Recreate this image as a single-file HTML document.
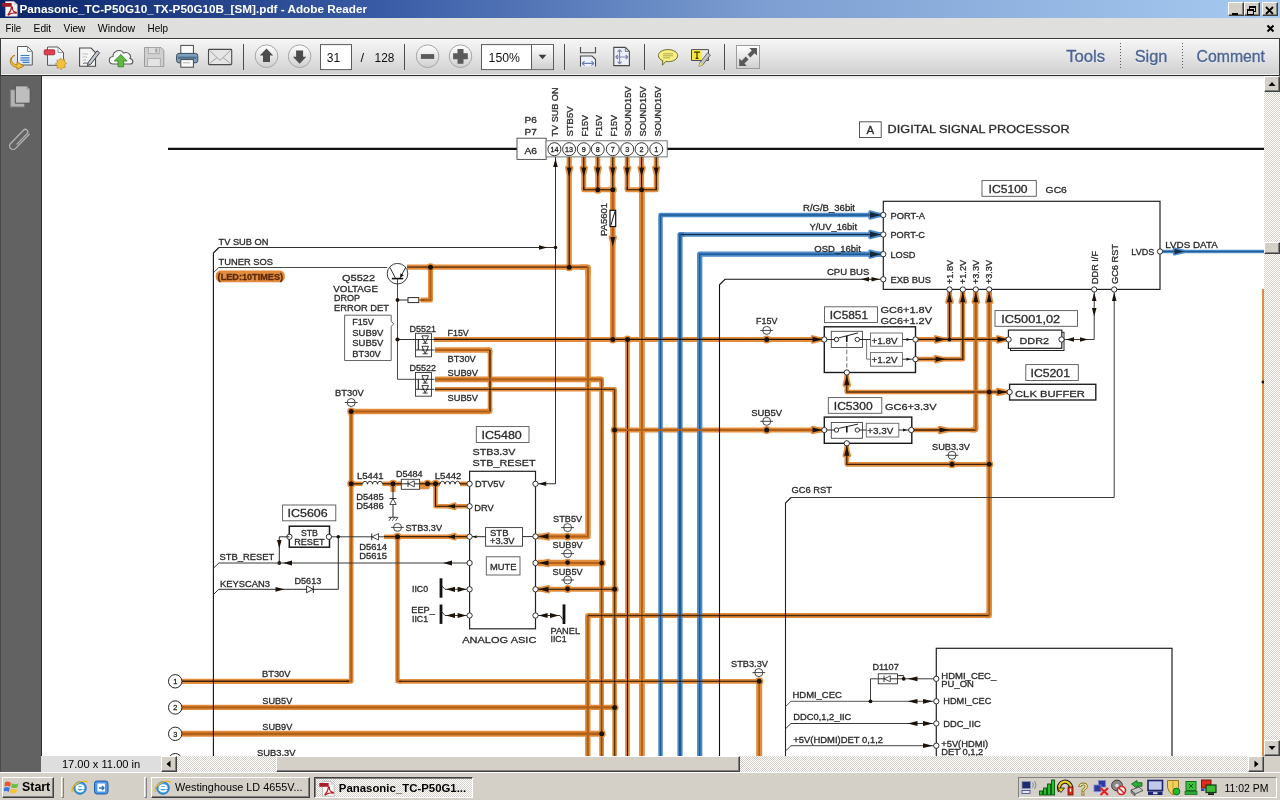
<!DOCTYPE html>
<html><head><meta charset="utf-8"><title>Adobe Reader</title>
<style>
*{box-sizing:border-box;margin:0;padding:0}
html,body{width:1280px;height:800px;overflow:hidden;background:#d4d0c8;font-family:"Liberation Sans",sans-serif;}
.abs{position:absolute}
#title{left:0;top:0;width:1280px;height:18px;background:linear-gradient(90deg,#0a246a 0%,#3a5ca6 30%,#7d9fd2 60%,#a6caf0 100%);}
#title .t{left:19px;top:1px;color:#fff;font-weight:bold;font-size:12px;line-height:15px;white-space:nowrap;letter-spacing:0px}
.wb{top:2px;width:16px;height:14px;background:#d4d0c8;border:1px solid;border-color:#fff #404040 #404040 #fff;box-shadow:inset -1px -1px 0 #808080}
#menu{left:0;top:18px;width:1280px;height:20px;background:#dfdfdd}
#menu span{position:absolute;top:3px;font-size:12px;line-height:14px;color:#000}
#tb{left:0;top:38px;width:1280px;height:38px;background:linear-gradient(180deg,#f6f6f6 0%,#e6e6e6 45%,#cfcfcf 100%);border-top:1px solid #3c3c3c;border-bottom:1px solid #2e2e2e;border-left:1px solid #3c3c3c;border-right:1px solid #3c3c3c}
#tb:before{content:"";position:absolute;left:0;top:0;width:100%;height:1px;background:#fff}
#tb:after{content:"";position:absolute;left:0;bottom:0;width:100%;height:1px;background:#f2f2f2}
.sep{top:46px;width:1px;height:24px;background:#8c8c8c;box-shadow:1px 0 0 #f4f4f4}
.rb{width:23px;height:23px;border-radius:50%;border:1px solid #9a9a9a;background:linear-gradient(180deg,#fdfdfd,#d2d2d2);top:45px}
.inp{background:#fff;border:1px solid #8a8a8a;border-top-color:#6a6a6a;top:44px;height:25px;font-size:13px;line-height:23px;color:#222}
#lp{left:0;top:76px;width:42px;height:696px;background:#626262;border-right:1px solid #2c2c2c;border-left:1px solid #4a4a4a}
#doc{left:42px;top:76px;width:1222px;height:680px;background:#fff;overflow:hidden}
#doc svg{position:absolute;left:-42px;top:-76px;will-change:transform}
svg{will-change:transform}
#vs{left:1264px;top:76px;width:16px;height:680px}
.dith{background-color:#fff;background-image:linear-gradient(45deg,#d4d0c8 25%,transparent 25%,transparent 75%,#d4d0c8 75%),linear-gradient(45deg,#d4d0c8 25%,transparent 25%,transparent 75%,#d4d0c8 75%);background-size:2px 2px;background-position:0 0,1px 1px}
.btn3{background:#d4d0c8;border:1px solid;border-color:#fff #404040 #404040 #fff;box-shadow:inset -1px -1px 0 #808080,inset 1px 1px 0 #d4d0c8}
#hs{left:41px;top:756px;width:1223px;height:16px;background:#d4d0c8}
#task{left:0;top:772px;width:1280px;height:28px;background:#d4d0c8;border-top:1px solid #fff}
.tbtn{top:3px;height:22px;font-size:12px;line-height:18px;white-space:nowrap;overflow:hidden;color:#000}
</style></head><body>

<!-- title bar -->
<div id="title" class="abs">
 <svg class="abs" style="left:0;top:0" width="20" height="18" viewBox="0 0 20 18"><path d="M5.500 1.500 H14 L17.300 4.800 V16.200 H5.500 Z" fill="#f6f4f2" stroke="#c8b8b8" stroke-width="0.600"/><path d="M14 1.500 V4.800 H17.300 Z" fill="#d8d0d0"/><rect x="2.300" y="3" width="9.400" height="3.800" fill="#a01c26"/><path d="M8 14.600 C9.600 12.400 11.200 9.600 11.300 7.600 C11.300 6.600 12.500 6.700 12.400 7.900 C12.300 10 14 12 16 12.300 C16.800 12.500 16.600 13.400 15.600 13.200 C13.400 12.800 10.400 13.200 8.500 15 Z" fill="none" stroke="#b0141e" stroke-width="1.200"/></svg>
 <svg class="abs" style="left:0;top:0" width="400" height="18" font-family="Liberation Sans, sans-serif"><text x="19.4" y="13.1" font-size="11.6" font-weight="bold" fill="#fff" textLength="347.6" lengthAdjust="spacingAndGlyphs">Panasonic_TC-P50G10_TX-P50G10B_[SM].pdf - Adobe Reader</text></svg>
 <div class="abs wb" style="left:1228px"><svg width="14" height="12"><rect x="3" y="8" width="6" height="2" fill="#000"/></svg></div>
 <div class="abs wb" style="left:1244px"><svg width="14" height="12"><rect x="4.5" y="1.5" width="6" height="5" fill="none" stroke="#000"/><rect x="4" y="1" width="7" height="2" fill="#000"/><rect x="2.5" y="4.5" width="6" height="5" fill="#d4d0c8" stroke="#000"/><rect x="2" y="4" width="7" height="2" fill="#000"/></svg></div>
 <div class="abs wb" style="left:1262px"><svg width="14" height="12"><path d="M3 2 L10 9 M10 2 L3 9" stroke="#000" stroke-width="1.8"/></svg></div>
</div>

<!-- menu bar -->
<div id="menu" class="abs">
 <svg class="abs" style="left:0;top:0" width="200" height="20" font-family="Liberation Sans, sans-serif" font-size="11.4" fill="#000">
 <text x="5.6" y="13.5" textLength="15.6" lengthAdjust="spacingAndGlyphs">File</text>
 <text x="33.6" y="13.5" textLength="17.6" lengthAdjust="spacingAndGlyphs">Edit</text>
 <text x="63.6" y="13.5" textLength="21.8" lengthAdjust="spacingAndGlyphs">View</text>
 <text x="97.8" y="13.5" textLength="37.4" lengthAdjust="spacingAndGlyphs">Window</text>
 <text x="147.6" y="13.5" textLength="20.4" lengthAdjust="spacingAndGlyphs">Help</text>
 </svg>
 <svg class="abs" style="left:1266px;top:6px" width="10" height="10"><path d="M1.5 1.5 L7.5 7.5 M7.5 1.5 L1.5 7.5" stroke="#000" stroke-width="2"/></svg>
</div>

<!-- toolbar -->
<div id="tb" class="abs"></div>
<svg class="abs" style="left:0;top:38px" width="1280" height="38" viewBox="0 38 1280 38" font-family="Liberation Sans, sans-serif">
<defs>
<linearGradient id="gb" x1="0" y1="0" x2="0" y2="1"><stop offset="0" stop-color="#ffffff"/><stop offset="1" stop-color="#cfcfcf"/></linearGradient>
<linearGradient id="gp" x1="0" y1="0" x2="0" y2="1"><stop offset="0" stop-color="#ffffff"/><stop offset="1" stop-color="#dfe6f2"/></linearGradient>
</defs>
<!-- 1: doc with blue lines + yellow arrow -->
<path d="M17.5 46.5 H27.5 L32.3 51.5 V65 H17.5 Z" fill="url(#gp)" stroke="#5a5a5a" stroke-width="1"/>
<path d="M27.5 46.5 V51.5 H32.3" fill="none" stroke="#8a8a8a" stroke-width="0.9"/>
<path d="M20.5 55.5 H29.5 M20.5 57.8 H29.5 M20.5 60.1 H29.5 M22.5 62.4 H29.5" stroke="#3f7ec6" stroke-width="1.2"/>
<path d="M15 55.5 C10 56 10 64.5 17 64.8 L17 61.8 L23.8 66 L17 69.5 L17 67.2 C8.5 67.2 8.2 56 15 55.5 Z" fill="#f0c040" stroke="#a87a18" stroke-width="0.9"/>
<!-- 2: doc with red tag and gold star -->
<path d="M47.5 47 H58 L63.5 52.5 V65.3 H47.5 Z" fill="url(#gp)" stroke="#5a5a5a" stroke-width="1"/>
<path d="M58 47 V52.5 H63.5" fill="none" stroke="#8a8a8a" stroke-width="0.9"/>
<rect x="44.2" y="49.8" width="10.5" height="5" rx="1" fill="#e04050" stroke="#a01828" stroke-width="0.8"/>
<path d="M60.5 58 l1.6 2 l2.6 -.6 l-.3 2.6 l2.3 1.3 l-2.1 1.6 l.6 2.6 l-2.6 0 l-1.4 2.2 l-1.7 -2 l-2.6 .4 l.5 -2.6 l-2.2 -1.5 l2.2 -1.4 l-.4 -2.6 l2.6 .2 z" fill="#f2c23c" stroke="#b88a20" stroke-width="0.7"/>
<!-- 3: doc with pen -->
<path d="M79.6 48 H91 L95.5 52.5 V66.3 H79.6 Z" fill="#f4f4f4" stroke="#4a4a4a" stroke-width="1.1"/>
<path d="M82.5 54 H88 M82.5 57 H87 M82.5 60 H86" stroke="#bcbcbc" stroke-width="1"/>
<path d="M83 64 C85 61.5 86.5 64.5 88.5 62.5" fill="none" stroke="#444" stroke-width="0.9"/>
<path d="M88.3 62.3 L97 50.8 L99.6 52.8 L90.8 64.2 L87.4 65.6 Z" fill="#c8ccd2" stroke="#3c424c" stroke-width="1"/>
<!-- 4: cloud with green arrow -->
<path d="M113.5 64 C108 64 108 57 113 56.5 C113 50.5 121 48.5 123.5 53 C128 51 132 55.5 130 58.5 C134 59.5 133.5 64 130 64 Z" fill="#fafafa" stroke="#5c5c5c" stroke-width="1.1"/>
<path d="M120.8 54.5 L127.2 61 H123.6 V66.8 H118 V61 H114.4 Z" fill="#62b844" stroke="#3a8a28" stroke-width="0.9"/>
<!-- 5: floppy (disabled) -->
<path d="M144.5 47.5 H161 L163.8 50.3 V66.5 H144.5 Z" fill="#d0d0d0" stroke="#9c9c9c" stroke-width="1"/>
<rect x="148.3" y="47.5" width="11" height="6.2" fill="#dedede" stroke="#a4a4a4" stroke-width="0.8"/>
<rect x="155.2" y="48.5" width="2.2" height="4" fill="#a4a4a4"/>
<rect x="147.7" y="58.4" width="12.6" height="8" fill="#e4e4e4" stroke="#a4a4a4" stroke-width="0.8"/>
<!-- 6: printer -->
<rect x="180.8" y="45.4" width="12.6" height="9" fill="#fbfbfb" stroke="#4a4a4a" stroke-width="1"/>
<rect x="176.6" y="53.4" width="21.2" height="9.4" rx="2.4" fill="#7f9fbe" stroke="#3a4a5a" stroke-width="1"/>
<rect x="178" y="56.6" width="18.4" height="2.2" fill="#4f6f90"/>
<rect x="180.8" y="59.6" width="12.6" height="7.6" fill="#fbfbfb" stroke="#4a4a4a" stroke-width="1"/>
<path d="M183 62.8 H190" stroke="#b0b0b0" stroke-width="1"/>
<!-- 7: envelope -->
<rect x="208.5" y="49.4" width="23.2" height="15.2" rx="0.8" fill="#e6e6e6" stroke="#4a4a4a" stroke-width="1.1"/>
<path d="M209.5 50.4 L220 60.4 L230.6 50.4 M209.5 63.6 L217 57.6 M230.6 63.6 L223.2 57.6" fill="none" stroke="#9a9a9a" stroke-width="0.9"/>
<!-- separators -->
<g stroke="#4c4c4c" stroke-width="1"><path d="M243.5 44 V70 M404.5 44 V70 M564.5 44 V70 M644.5 44 V70 M724.5 44 V70"/></g>
<!-- round buttons -->
<g fill="url(#gb)" stroke="#a4a4a4" stroke-width="1"><circle cx="266.5" cy="56.2" r="11.3"/><circle cx="299.6" cy="56.2" r="11.3"/><circle cx="427.6" cy="56.2" r="11.3"/><circle cx="460.5" cy="56.2" r="11.3"/></g>
<path d="M266.5 48.6 L273.2 55.6 H270 V62 H263 V55.6 H259.8 Z" fill="#4c4c4c"/>
<path d="M299.6 63.8 L306.3 56.8 H303.1 V50.4 H296.1 V56.8 H292.9 Z" fill="#4c4c4c"/>
<rect x="420.9" y="54.1" width="13.3" height="4.8" fill="#5a5a5a"/>
<path d="M457.5 48.9 H463.5 V53.3 H467.8 V59.3 H463.5 V63.7 H457.5 V59.3 H453.1 V53.3 H457.5 Z" fill="#5a5a5a"/>
<!-- page input -->
<rect x="320.5" y="44.6" width="31" height="25" fill="#fff" stroke="#5c5c5c" stroke-width="1"/>
<text x="326.8" y="61.6" font-size="13" fill="#111" textLength="13.4" lengthAdjust="spacingAndGlyphs">31</text>
<text x="360.4" y="61.6" font-size="13" fill="#111">/</text>
<text x="374.6" y="61.6" font-size="13" fill="#111" textLength="19.8" lengthAdjust="spacingAndGlyphs">128</text>
<!-- zoom combo -->
<rect x="481.5" y="44.6" width="72" height="25" fill="#fff" stroke="#5c5c5c" stroke-width="1"/>
<rect x="531.5" y="45.1" width="21.5" height="24" fill="url(#gb)"/>
<path d="M531.5 44.6 V69.6" stroke="#5c5c5c" stroke-width="1"/>
<text x="488.6" y="61.8" font-size="13" fill="#111" textLength="31.4" lengthAdjust="spacingAndGlyphs">150%</text>
<path d="M538.6 54.8 H546.4 L542.5 59.2 Z" fill="#3c3c3c"/>
<!-- fit width -->
<path d="M580.5 47 V52.8 H595.5 V47" fill="#ececec" stroke="#4a4a4a" stroke-width="1.1"/>
<path d="M580.5 66.5 V56 H592 L595.5 59.3 V66.5" fill="#eef2fa" stroke="#4a4a4a" stroke-width="1.1"/>
<path d="M582 63.4 H594 M582 63.4 l2.6 -2.2 M582 63.4 l2.6 2.2 M594 63.4 l-2.6 -2.2 M594 63.4 l-2.6 2.2" stroke="#6a7cae" stroke-width="1.1" fill="none"/>
<!-- fit page -->
<path d="M613.8 47.4 H625.4 L629.4 51.4 V65.6 H613.8 Z" fill="#eef0f8" stroke="#4a4a4a" stroke-width="1.1"/>
<path d="M625.4 47.4 V51.4 H629.4" fill="none" stroke="#6a6a6a" stroke-width="0.9"/>
<path d="M619.6 49.6 V64 M615.6 57 H628 M619.6 49.6 l-2 2.4 M619.6 49.6 l2 2.4 M619.6 64 l-2 -2.4 M619.6 64 l2 -2.4 M615.6 57 l2.4 -2 M615.6 57 l2.4 2 M628 57 l-2.4 -2 M628 57 l-2.4 2" stroke="#7c86ae" stroke-width="1.1" fill="none"/>
<!-- comment bubble -->
<path d="M668 49.6 C674 49.6 677.6 52.4 677.6 55.6 C677.6 59 673.6 61.6 668.4 61.6 C667.4 61.6 666.6 61.5 665.8 61.4 L662.4 65.2 L662.8 60.6 C660 59.6 658.4 57.8 658.4 55.6 C658.4 52.4 662 49.6 668 49.6 Z" fill="#f6ef82" stroke="#6c6a34" stroke-width="1"/>
<path d="M663 53.8 H673 M663 55.8 H673 M663 57.8 H670" stroke="#a09a40" stroke-width="0.8"/>
<!-- highlight text -->
<path d="M691.5 49.6 H708.5 V60.5 H691.5 Z" fill="#e8e8e8" stroke="#4a4a4a" stroke-width="1"/>
<rect x="692" y="50.1" width="9.6" height="9.8" fill="#f4e840"/>
<path d="M694 52.2 H700 M697 52.2 V58.4 M695.6 58.4 H698.4" stroke="#3a3408" stroke-width="1.2"/>
<path d="M700 62.5 L707.6 52.8 L710.4 55 L702.8 64.8 L699 66.2 Z" fill="#c4c4c4" stroke="#5a5a5a" stroke-width="0.9"/>
<path d="M699 66.2 L700 62.5 L702.8 64.8 Z" fill="#f0e860"/>
<!-- expand -->
<rect x="736.5" y="45.5" width="23" height="23" fill="url(#gb)" stroke="#9c9c9c" stroke-width="1"/>
<path d="M757 48 V55.6 L754.5 53.2 L750.4 57.4 L747.6 54.6 L751.8 50.4 L749.4 48 Z" fill="#585858"/>
<path d="M739.2 66 V58.4 L741.7 60.8 L745.8 56.6 L748.6 59.4 L744.4 63.6 L746.8 66 Z" fill="#585858"/>
<!-- right panel buttons -->
<g fill="#ffffff" fill-opacity="0.75" font-size="15.6">
<text x="1066.2" y="62.9" textLength="39" lengthAdjust="spacingAndGlyphs">Tools</text>
<text x="1134.7" y="62.9" textLength="32.8" lengthAdjust="spacingAndGlyphs">Sign</text>
<text x="1196.6" y="62.9" textLength="68.4" lengthAdjust="spacingAndGlyphs">Comment</text>
</g>
<g fill="#4b6491" stroke="#4b6491" stroke-width="0.3" font-size="15.6">
<text x="1066.2" y="61.9" textLength="39" lengthAdjust="spacingAndGlyphs">Tools</text>
<text x="1134.7" y="61.9" textLength="32.8" lengthAdjust="spacingAndGlyphs">Sign</text>
<text x="1196.6" y="61.9" textLength="68.4" lengthAdjust="spacingAndGlyphs">Comment</text>
</g>
<path d="M1120.5 43 V70 M1182.5 43 V70" stroke="#5a5a5a" stroke-width="1" stroke-dasharray="1 2"/>
</svg>


<!-- left pane -->
<div id="lp" class="abs">
 <svg class="abs" style="left:0;top:0" width="40" height="100" viewBox="0 76 40 100">
  <rect x="9.3" y="89.8" width="14.2" height="17.2" fill="#b2b2b2" stroke="#7a7a7a" stroke-width="0.9"/>
  <path d="M14.3 85.8 H26 L29.2 89 V103.2 H14.3 Z" fill="#bebebe" stroke="#505050" stroke-width="1"/>
  <path d="M26 85.800 V89 H29.200" fill="none" stroke="#8a8a8a" stroke-width="0.8"/>
  <g transform="translate(7.2,146) rotate(-46)"><path d="M23,7 L3.5,7 A3.5,3.5 0 0 1 3.5,0 L22,0 A2.5,2.5 0 0 1 22,5 L7.5,5" fill="none" stroke="#b4b4b4" stroke-width="1.3" stroke-linecap="round"/></g>
 </svg>
</div>

<!-- document -->
<div id="doc" class="abs">
<svg width="1280" height="800" viewBox="0 0 1280 800" font-family="Liberation Sans, sans-serif">
<polyline points="569.20,157.00 569.20,267.00" fill="none" stroke="#e38d3c" stroke-width="5.20" stroke-linejoin="round" stroke-linecap="butt"/>
<polygon points="569.20,177.00 566.70,167.50 571.70,167.50" fill="#e38d3c" stroke="#e38d3c" stroke-width="3.4" stroke-linejoin="round"/>
<circle cx="569.20" cy="267.20" r="4.00" fill="#e38d3c"/>
<polyline points="583.75,157.00 583.75,189.70" fill="none" stroke="#e38d3c" stroke-width="5.00" stroke-linejoin="round" stroke-linecap="butt"/>
<polygon points="583.75,177.00 581.25,167.50 586.25,167.50" fill="#e38d3c" stroke="#e38d3c" stroke-width="3.4" stroke-linejoin="round"/>
<polyline points="597.80,157.00 597.80,189.70" fill="none" stroke="#e38d3c" stroke-width="5.00" stroke-linejoin="round" stroke-linecap="butt"/>
<polygon points="597.80,177.00 595.30,167.50 600.30,167.50" fill="#e38d3c" stroke="#e38d3c" stroke-width="3.4" stroke-linejoin="round"/>
<polyline points="612.80,157.00 612.80,189.70" fill="none" stroke="#e38d3c" stroke-width="5.00" stroke-linejoin="round" stroke-linecap="butt"/>
<polygon points="612.80,177.00 610.30,167.50 615.30,167.50" fill="#e38d3c" stroke="#e38d3c" stroke-width="3.4" stroke-linejoin="round"/>
<polyline points="583.75,187.00 583.75,189.70 612.80,189.70" fill="none" stroke="#e38d3c" stroke-width="5.00" stroke-linejoin="round" stroke-linecap="butt"/>
<circle cx="597.80" cy="189.70" r="4.00" fill="#e38d3c"/>
<circle cx="612.80" cy="189.70" r="4.00" fill="#e38d3c"/>
<polyline points="612.80,189.70 612.80,339.40" fill="none" stroke="#e38d3c" stroke-width="5.50" stroke-linejoin="round" stroke-linecap="butt"/>
<polygon points="612.80,246.50 610.30,237.00 615.30,237.00" fill="#e38d3c" stroke="#e38d3c" stroke-width="3.4" stroke-linejoin="round"/>
<polyline points="627.20,157.00 627.20,189.70" fill="none" stroke="#e38d3c" stroke-width="5.00" stroke-linejoin="round" stroke-linecap="butt"/>
<polygon points="627.20,177.00 624.70,167.50 629.70,167.50" fill="#e38d3c" stroke="#e38d3c" stroke-width="3.4" stroke-linejoin="round"/>
<polyline points="641.60,157.00 641.60,189.70" fill="none" stroke="#e38d3c" stroke-width="5.00" stroke-linejoin="round" stroke-linecap="butt"/>
<polygon points="641.60,177.00 639.10,167.50 644.10,167.50" fill="#e38d3c" stroke="#e38d3c" stroke-width="3.4" stroke-linejoin="round"/>
<polyline points="656.25,157.00 656.25,189.70" fill="none" stroke="#e38d3c" stroke-width="5.00" stroke-linejoin="round" stroke-linecap="butt"/>
<polygon points="656.25,177.00 653.75,167.50 658.75,167.50" fill="#e38d3c" stroke="#e38d3c" stroke-width="3.4" stroke-linejoin="round"/>
<polyline points="627.20,187.00 627.20,189.70 656.25,189.70 656.25,187.00" fill="none" stroke="#e38d3c" stroke-width="5.00" stroke-linejoin="round" stroke-linecap="butt"/>
<circle cx="641.60" cy="189.70" r="4.00" fill="#e38d3c"/>
<polyline points="641.90,189.70 641.90,760.00" fill="none" stroke="#e38d3c" stroke-width="5.80" stroke-linejoin="round" stroke-linecap="butt"/>
<rect x="215.8" y="270.6" width="69" height="11.6" rx="5" fill="#e38d3c"/>
<polyline points="407.00,267.10 588.00,267.10" fill="none" stroke="#e38d3c" stroke-width="5.20" stroke-linejoin="round" stroke-linecap="butt"/>
<polyline points="588.00,267.10 588.00,536.40 538.00,536.40" fill="none" stroke="#e38d3c" stroke-width="5.50" stroke-linejoin="round" stroke-linecap="butt"/>
<polyline points="580.00,267.10 588.00,267.10 588.00,275.00" fill="none" stroke="#e38d3c" stroke-width="5.40" stroke-linejoin="round" stroke-linecap="butt"/>
<polyline points="430.50,267.10 430.50,300.00 420.50,300.00" fill="none" stroke="#e38d3c" stroke-width="5.00" stroke-linejoin="round" stroke-linecap="butt"/>
<circle cx="430.50" cy="267.20" r="4.00" fill="#e38d3c"/>
<polyline points="433.80,339.40 822.00,339.40" fill="none" stroke="#e38d3c" stroke-width="5.00" stroke-linejoin="round" stroke-linecap="butt"/>
<circle cx="612.80" cy="339.50" r="4.00" fill="#e38d3c"/>
<circle cx="627.50" cy="339.50" r="4.00" fill="#e38d3c"/>
<circle cx="766.70" cy="339.50" r="4.00" fill="#e38d3c"/>
<polyline points="627.50,339.40 627.50,760.00" fill="none" stroke="#e38d3c" stroke-width="4.80" stroke-linejoin="round" stroke-linecap="butt"/>
<polygon points="822.50,339.40 812.50,336.80 812.50,342.00" fill="#e38d3c" stroke="#e38d3c" stroke-width="3.4" stroke-linejoin="round"/>
<polyline points="435.00,350.00 490.00,350.00" fill="none" stroke="#e38d3c" stroke-width="5.60" stroke-linejoin="round" stroke-linecap="butt"/>
<polyline points="490.00,350.00 490.00,411.50" fill="none" stroke="#e38d3c" stroke-width="4.60" stroke-linejoin="round" stroke-linecap="butt"/>
<polyline points="490.00,411.50 351.20,411.50" fill="none" stroke="#e38d3c" stroke-width="5.40" stroke-linejoin="round" stroke-linecap="butt"/>
<polyline points="486.00,350.00 490.00,350.00 490.00,354.00" fill="none" stroke="#e38d3c" stroke-width="4.80" stroke-linejoin="round" stroke-linecap="butt"/>
<polyline points="486.00,411.50 490.00,411.50 490.00,408.00" fill="none" stroke="#e38d3c" stroke-width="4.80" stroke-linejoin="round" stroke-linecap="butt"/>
<polyline points="351.20,409.00 351.20,681.30 346.00,681.30" fill="none" stroke="#e38d3c" stroke-width="4.70" stroke-linejoin="round" stroke-linecap="butt"/>
<polyline points="349.00,681.30 182.00,681.30" fill="none" stroke="#e38d3c" stroke-width="5.30" stroke-linejoin="round" stroke-linecap="butt"/>
<circle cx="351.20" cy="411.50" r="4.00" fill="#e38d3c"/>
<circle cx="351.20" cy="483.80" r="4.00" fill="#e38d3c"/>
<polyline points="435.00,379.30 601.70,379.30" fill="none" stroke="#e38d3c" stroke-width="5.70" stroke-linejoin="round" stroke-linecap="butt"/>
<polyline points="601.60,379.30 601.60,760.00" fill="none" stroke="#e38d3c" stroke-width="4.80" stroke-linejoin="round" stroke-linecap="butt"/>
<polyline points="597.00,379.30 601.60,379.30 601.60,384.00" fill="none" stroke="#e38d3c" stroke-width="4.90" stroke-linejoin="round" stroke-linecap="butt"/>
<polyline points="538.00,563.00 601.70,563.00" fill="none" stroke="#e38d3c" stroke-width="6.40" stroke-linejoin="round" stroke-linecap="butt"/>
<circle cx="601.70" cy="563.00" r="4.00" fill="#e38d3c"/>
<circle cx="601.70" cy="733.80" r="4.00" fill="#e38d3c"/>
<polyline points="182.00,733.80 601.70,733.80" fill="none" stroke="#e38d3c" stroke-width="5.90" stroke-linejoin="round" stroke-linecap="butt"/>
<polyline points="435.00,389.30 614.60,389.30" fill="none" stroke="#e38d3c" stroke-width="4.60" stroke-linejoin="round" stroke-linecap="butt"/>
<polyline points="614.60,389.30 614.60,760.00" fill="none" stroke="#e38d3c" stroke-width="4.70" stroke-linejoin="round" stroke-linecap="butt"/>
<polyline points="610.00,389.30 614.60,389.30 614.60,394.00" fill="none" stroke="#e38d3c" stroke-width="4.60" stroke-linejoin="round" stroke-linecap="butt"/>
<polyline points="538.00,589.30 614.60,589.30" fill="none" stroke="#e38d3c" stroke-width="5.00" stroke-linejoin="round" stroke-linecap="butt"/>
<circle cx="614.60" cy="589.30" r="4.00" fill="#e38d3c"/>
<circle cx="614.60" cy="707.50" r="4.00" fill="#e38d3c"/>
<circle cx="614.60" cy="430.00" r="4.00" fill="#e38d3c"/>
<polyline points="182.00,707.40 614.60,707.40" fill="none" stroke="#e38d3c" stroke-width="5.10" stroke-linejoin="round" stroke-linecap="butt"/>
<polyline points="614.60,430.00 822.00,430.00" fill="none" stroke="#e38d3c" stroke-width="5.20" stroke-linejoin="round" stroke-linecap="butt"/>
<polygon points="822.50,430.00 812.50,427.40 812.50,432.60" fill="#e38d3c" stroke="#e38d3c" stroke-width="3.4" stroke-linejoin="round"/>
<circle cx="766.70" cy="430.00" r="4.00" fill="#e38d3c"/>
<polyline points="351.20,483.80 362.50,483.80" fill="none" stroke="#e38d3c" stroke-width="4.60" stroke-linejoin="round" stroke-linecap="butt"/>
<polyline points="382.50,483.80 401.30,483.80" fill="none" stroke="#e38d3c" stroke-width="4.60" stroke-linejoin="round" stroke-linecap="butt"/>
<polyline points="419.50,483.80 440.00,483.80" fill="none" stroke="#e38d3c" stroke-width="4.60" stroke-linejoin="round" stroke-linecap="butt"/>
<polyline points="460.00,483.80 467.50,483.80" fill="none" stroke="#e38d3c" stroke-width="4.60" stroke-linejoin="round" stroke-linecap="butt"/>
<polyline points="393.00,483.80 393.00,492.00" fill="none" stroke="#e38d3c" stroke-width="5.00" stroke-linejoin="round" stroke-linecap="butt"/>
<polyline points="419.50,487.50 428.00,487.50 428.00,483.80" fill="none" stroke="#e38d3c" stroke-width="3.50" stroke-linejoin="round" stroke-linecap="butt"/>
<circle cx="393.00" cy="483.80" r="4.00" fill="#e38d3c"/>
<circle cx="427.50" cy="483.80" r="4.00" fill="#e38d3c"/>
<circle cx="435.50" cy="483.80" r="4.00" fill="#e38d3c"/>
<polyline points="435.50,483.80 435.50,506.30 467.50,506.30" fill="none" stroke="#e38d3c" stroke-width="4.60" stroke-linejoin="round" stroke-linecap="butt"/>
<polygon points="447.00,506.30 455.00,504.10 455.00,508.50" fill="#e38d3c" stroke="#e38d3c" stroke-width="3.4" stroke-linejoin="round"/>
<polyline points="467.50,536.70 384.00,536.70" fill="none" stroke="#e38d3c" stroke-width="4.60" stroke-linejoin="round" stroke-linecap="butt"/>
<polyline points="397.50,536.70 397.50,681.30 402.00,681.30" fill="none" stroke="#e38d3c" stroke-width="4.50" stroke-linejoin="round" stroke-linecap="butt"/>
<polyline points="399.00,681.30 759.20,681.30" fill="none" stroke="#e38d3c" stroke-width="4.70" stroke-linejoin="round" stroke-linecap="butt"/>
<polyline points="759.20,681.30 759.20,760.00" fill="none" stroke="#e38d3c" stroke-width="6.00" stroke-linejoin="round" stroke-linecap="butt"/>
<polygon points="447.00,536.70 455.00,534.50 455.00,538.90" fill="#e38d3c" stroke="#e38d3c" stroke-width="3.4" stroke-linejoin="round"/>
<circle cx="397.50" cy="536.80" r="4.00" fill="#e38d3c"/>
<circle cx="759.20" cy="681.30" r="4.00" fill="#e38d3c"/>
<polyline points="538.00,536.40 588.00,536.40" fill="none" stroke="#e38d3c" stroke-width="5.50" stroke-linejoin="round" stroke-linecap="butt"/>
<polygon points="538.50,536.40 548.50,533.80 548.50,539.00" fill="#e38d3c" stroke="#e38d3c" stroke-width="3.4" stroke-linejoin="round"/>
<polygon points="538.50,563.00 548.50,560.40 548.50,565.60" fill="#e38d3c" stroke="#e38d3c" stroke-width="3.4" stroke-linejoin="round"/>
<polygon points="538.50,589.30 548.50,586.70 548.50,591.90" fill="#e38d3c" stroke="#e38d3c" stroke-width="3.4" stroke-linejoin="round"/>
<circle cx="567.60" cy="536.60" r="3.90" fill="#e38d3c"/>
<circle cx="567.60" cy="562.60" r="3.90" fill="#e38d3c"/>
<circle cx="567.60" cy="589.00" r="3.90" fill="#e38d3c"/>
<polyline points="587.80,760.00 587.80,615.50" fill="none" stroke="#e38d3c" stroke-width="5.50" stroke-linejoin="round" stroke-linecap="butt"/>
<polyline points="587.80,615.50 989.20,615.50" fill="none" stroke="#e38d3c" stroke-width="5.10" stroke-linejoin="round" stroke-linecap="butt"/>
<polyline points="989.20,615.50 989.20,292.00" fill="none" stroke="#e38d3c" stroke-width="5.60" stroke-linejoin="round" stroke-linecap="butt"/>
<polyline points="587.80,620.00 587.80,615.50 592.00,615.50" fill="none" stroke="#e38d3c" stroke-width="5.20" stroke-linejoin="round" stroke-linecap="butt"/>
<polyline points="985.00,615.50 989.20,615.50 989.20,611.00" fill="none" stroke="#e38d3c" stroke-width="5.30" stroke-linejoin="round" stroke-linecap="butt"/>
<polyline points="917.80,339.40 1007.00,339.40" fill="none" stroke="#e38d3c" stroke-width="4.80" stroke-linejoin="round" stroke-linecap="butt"/>
<polyline points="949.50,339.40 949.50,292.00" fill="none" stroke="#e38d3c" stroke-width="4.80" stroke-linejoin="round" stroke-linecap="butt"/>
<polyline points="917.80,359.20 962.80,359.20 962.80,292.00" fill="none" stroke="#e38d3c" stroke-width="4.80" stroke-linejoin="round" stroke-linecap="butt"/>
<polygon points="945.50,339.40 935.50,336.80 935.50,342.00" fill="#e38d3c" stroke="#e38d3c" stroke-width="3.4" stroke-linejoin="round"/>
<polygon points="1007.50,339.40 997.50,336.80 997.50,342.00" fill="#e38d3c" stroke="#e38d3c" stroke-width="3.4" stroke-linejoin="round"/>
<polygon points="945.50,359.20 935.50,356.60 935.50,361.80" fill="#e38d3c" stroke="#e38d3c" stroke-width="3.4" stroke-linejoin="round"/>
<polygon points="949.50,292.30 946.90,302.30 952.10,302.30" fill="#e38d3c" stroke="#e38d3c" stroke-width="3.4" stroke-linejoin="round"/>
<polygon points="962.80,292.30 960.20,302.30 965.40,302.30" fill="#e38d3c" stroke="#e38d3c" stroke-width="3.4" stroke-linejoin="round"/>
<polygon points="975.80,292.30 973.20,302.30 978.40,302.30" fill="#e38d3c" stroke="#e38d3c" stroke-width="3.4" stroke-linejoin="round"/>
<polygon points="989.20,292.30 986.60,302.30 991.80,302.30" fill="#e38d3c" stroke="#e38d3c" stroke-width="3.4" stroke-linejoin="round"/>
<polyline points="846.80,375.00 846.80,392.00 1007.50,392.00" fill="none" stroke="#e38d3c" stroke-width="4.70" stroke-linejoin="round" stroke-linecap="butt"/>
<polygon points="846.80,375.20 844.20,385.20 849.40,385.20" fill="#e38d3c" stroke="#e38d3c" stroke-width="3.4" stroke-linejoin="round"/>
<polygon points="1007.50,392.00 997.50,389.40 997.50,394.60" fill="#e38d3c" stroke="#e38d3c" stroke-width="3.4" stroke-linejoin="round"/>
<circle cx="989.20" cy="392.00" r="4.00" fill="#e38d3c"/>
<polyline points="913.60,430.00 975.80,430.00" fill="none" stroke="#e38d3c" stroke-width="4.60" stroke-linejoin="round" stroke-linecap="butt"/>
<polyline points="975.80,430.00 975.80,292.00" fill="none" stroke="#e38d3c" stroke-width="5.20" stroke-linejoin="round" stroke-linecap="butt"/>
<polyline points="971.00,430.00 975.80,430.00 975.80,425.00" fill="none" stroke="#e38d3c" stroke-width="4.80" stroke-linejoin="round" stroke-linecap="butt"/>
<polygon points="949.50,430.00 939.50,427.40 939.50,432.60" fill="#e38d3c" stroke="#e38d3c" stroke-width="3.4" stroke-linejoin="round"/>
<polyline points="846.80,445.60 846.80,464.30 989.20,464.30" fill="none" stroke="#e38d3c" stroke-width="4.70" stroke-linejoin="round" stroke-linecap="butt"/>
<polygon points="846.80,445.80 844.20,455.80 849.40,455.80" fill="#e38d3c" stroke="#e38d3c" stroke-width="3.4" stroke-linejoin="round"/>
<circle cx="952.00" cy="464.30" r="4.00" fill="#e38d3c"/>
<circle cx="989.20" cy="464.30" r="4.00" fill="#e38d3c"/>
<polyline points="1263.30,289.00 1263.30,760.00" fill="none" stroke="#e38d3c" stroke-width="2.60" stroke-linejoin="round" stroke-linecap="butt"/>
<polyline points="660.50,760.00 660.50,215.00 883.00,215.00" fill="none" stroke="#4a8ac8" stroke-width="4.50" stroke-linejoin="round" stroke-linecap="butt"/>
<polyline points="680.00,760.00 680.00,234.50 684.00,234.50" fill="none" stroke="#4a8ac8" stroke-width="5.20" stroke-linejoin="round" stroke-linecap="butt"/>
<polyline points="681.00,234.50 883.00,234.50" fill="none" stroke="#4a8ac8" stroke-width="4.70" stroke-linejoin="round" stroke-linecap="butt"/>
<polyline points="699.70,760.00 699.70,254.20 883.00,254.20" fill="none" stroke="#4a8ac8" stroke-width="5.30" stroke-linejoin="round" stroke-linecap="butt"/>
<polygon points="881.00,215.00 870.00,212.00 870.00,218.00" fill="#4a8ac8" stroke="#4a8ac8" stroke-width="3.4" stroke-linejoin="round"/>
<polygon points="881.00,234.50 870.00,231.50 870.00,237.50" fill="#4a8ac8" stroke="#4a8ac8" stroke-width="3.4" stroke-linejoin="round"/>
<polygon points="881.00,254.20 870.00,251.20 870.00,257.20" fill="#4a8ac8" stroke="#4a8ac8" stroke-width="3.4" stroke-linejoin="round"/>
<polyline points="1160.00,251.50 1264.00,251.50" fill="none" stroke="#4a8ac8" stroke-width="3.60" stroke-linejoin="round" stroke-linecap="butt"/>
<polygon points="1184.00,251.50 1174.50,249.10 1174.50,253.90" fill="#4a8ac8" stroke="#4a8ac8" stroke-width="3.4" stroke-linejoin="round"/>
<polyline points="569.20,157.00 569.20,267.00" fill="none" stroke="#1c1006" stroke-width="1.10" stroke-linejoin="miter"/>
<polyline points="583.75,157.00 583.75,189.70" fill="none" stroke="#1c1006" stroke-width="1.10" stroke-linejoin="miter"/>
<polyline points="597.80,157.00 597.80,189.70" fill="none" stroke="#1c1006" stroke-width="1.10" stroke-linejoin="miter"/>
<polyline points="612.80,157.00 612.80,189.70" fill="none" stroke="#1c1006" stroke-width="1.10" stroke-linejoin="miter"/>
<polyline points="583.75,187.00 583.75,189.70 612.80,189.70" fill="none" stroke="#1c1006" stroke-width="1.10" stroke-linejoin="miter"/>
<polyline points="612.80,189.70 612.80,339.40" fill="none" stroke="#b06018" stroke-width="2.00" stroke-linejoin="miter"/>
<polyline points="627.20,157.00 627.20,189.70" fill="none" stroke="#1c1006" stroke-width="1.10" stroke-linejoin="miter"/>
<polyline points="641.60,157.00 641.60,189.70" fill="none" stroke="#1c1006" stroke-width="1.10" stroke-linejoin="miter"/>
<polyline points="656.25,157.00 656.25,189.70" fill="none" stroke="#1c1006" stroke-width="1.10" stroke-linejoin="miter"/>
<polyline points="627.20,187.00 627.20,189.70 656.25,189.70 656.25,187.00" fill="none" stroke="#1c1006" stroke-width="1.10" stroke-linejoin="miter"/>
<polyline points="641.90,189.70 641.90,760.00" fill="none" stroke="#b06018" stroke-width="1.80" stroke-linejoin="miter"/>
<polyline points="660.50,760.00 660.50,215.00 883.00,215.00" fill="none" stroke="#1f5a96" stroke-width="1.30" stroke-linejoin="miter"/>
<polyline points="680.00,760.00 680.00,234.50 684.00,234.50" fill="none" stroke="#1f5a96" stroke-width="2.20" stroke-linejoin="miter"/>
<polyline points="681.00,234.50 883.00,234.50" fill="none" stroke="#14243c" stroke-width="1.20" stroke-linejoin="miter"/>
<polyline points="699.70,760.00 699.70,254.20 883.00,254.20" fill="none" stroke="#1f5a96" stroke-width="1.40" stroke-linejoin="miter"/>
<polyline points="1160.00,251.50 1264.00,251.50" fill="none" stroke="#1f5a96" stroke-width="1.20" stroke-linejoin="miter"/>
<polyline points="407.00,267.10 588.00,267.10" fill="none" stroke="#7a4414" stroke-width="1.80" stroke-linejoin="miter"/>
<polyline points="588.00,267.10 588.00,536.40 538.00,536.40" fill="none" stroke="#b06018" stroke-width="2.00" stroke-linejoin="miter"/>
<polyline points="430.50,267.10 430.50,300.00 420.50,300.00" fill="none" stroke="#b06018" stroke-width="2.00" stroke-linejoin="miter"/>
<polyline points="433.80,339.40 822.00,339.40" fill="none" stroke="#1c1006" stroke-width="1.10" stroke-linejoin="miter"/>
<polyline points="627.50,339.40 627.50,760.00" fill="none" stroke="#1c1006" stroke-width="1.10" stroke-linejoin="miter"/>
<polyline points="435.00,350.00 490.00,350.00" fill="none" stroke="#b06018" stroke-width="2.20" stroke-linejoin="miter"/>
<polyline points="490.00,350.00 490.00,411.50" fill="none" stroke="#1c1006" stroke-width="1.20" stroke-linejoin="miter"/>
<polyline points="490.00,411.50 351.20,411.50" fill="none" stroke="#b06018" stroke-width="2.20" stroke-linejoin="miter"/>
<polyline points="351.20,409.00 351.20,681.30 346.00,681.30" fill="none" stroke="#b06018" stroke-width="2.00" stroke-linejoin="miter"/>
<polyline points="349.00,681.30 182.00,681.30" fill="none" stroke="#3c2008" stroke-width="1.40" stroke-linejoin="miter"/>
<polyline points="435.00,379.30 601.70,379.30" fill="none" stroke="#b06018" stroke-width="2.20" stroke-linejoin="miter"/>
<polyline points="601.60,379.30 601.60,760.00" fill="none" stroke="#8a4a12" stroke-width="1.60" stroke-linejoin="miter"/>
<polyline points="538.00,563.00 601.70,563.00" fill="none" stroke="#b06018" stroke-width="2.20" stroke-linejoin="miter"/>
<polyline points="182.00,733.80 601.70,733.80" fill="none" stroke="#b06018" stroke-width="2.80" stroke-linejoin="miter"/>
<polyline points="435.00,389.30 614.60,389.30" fill="none" stroke="#1c1006" stroke-width="1.10" stroke-linejoin="miter"/>
<polyline points="614.60,389.30 614.60,760.00" fill="none" stroke="#5a300c" stroke-width="1.50" stroke-linejoin="miter"/>
<polyline points="538.00,589.30 614.60,589.30" fill="none" stroke="#1c1006" stroke-width="1.10" stroke-linejoin="miter"/>
<polyline points="182.00,707.40 614.60,707.40" fill="none" stroke="#b06018" stroke-width="2.40" stroke-linejoin="miter"/>
<polyline points="614.60,430.00 822.00,430.00" fill="none" stroke="#b06018" stroke-width="2.00" stroke-linejoin="miter"/>
<polyline points="351.20,483.80 362.50,483.80" fill="none" stroke="#1c1006" stroke-width="1.10" stroke-linejoin="miter"/>
<polyline points="382.50,483.80 401.30,483.80" fill="none" stroke="#1c1006" stroke-width="1.10" stroke-linejoin="miter"/>
<polyline points="419.50,483.80 440.00,483.80" fill="none" stroke="#1c1006" stroke-width="1.10" stroke-linejoin="miter"/>
<polyline points="460.00,483.80 467.50,483.80" fill="none" stroke="#1c1006" stroke-width="1.10" stroke-linejoin="miter"/>
<polyline points="435.50,483.80 435.50,506.30 467.50,506.30" fill="none" stroke="#1c1006" stroke-width="1.10" stroke-linejoin="miter"/>
<polyline points="467.50,536.70 384.00,536.70" fill="none" stroke="#3c2008" stroke-width="1.30" stroke-linejoin="miter"/>
<polyline points="397.50,536.70 397.50,681.30 402.00,681.30" fill="none" stroke="#b06018" stroke-width="1.80" stroke-linejoin="miter"/>
<polyline points="399.00,681.30 759.20,681.30" fill="none" stroke="#1c1006" stroke-width="1.10" stroke-linejoin="miter"/>
<polyline points="759.20,681.30 759.20,760.00" fill="none" stroke="#b06018" stroke-width="1.60" stroke-linejoin="miter"/>
<polyline points="587.80,760.00 587.80,615.50" fill="none" stroke="#b06018" stroke-width="2.20" stroke-linejoin="miter"/>
<polyline points="587.80,615.50 989.20,615.50" fill="none" stroke="#4a2a0c" stroke-width="1.30" stroke-linejoin="miter"/>
<polyline points="989.20,615.50 989.20,292.00" fill="none" stroke="#b06018" stroke-width="2.00" stroke-linejoin="miter"/>
<polyline points="917.80,339.40 1007.00,339.40" fill="none" stroke="#1c1006" stroke-width="1.20" stroke-linejoin="miter"/>
<polyline points="949.50,339.40 949.50,292.00" fill="none" stroke="#1c1006" stroke-width="1.40" stroke-linejoin="miter"/>
<polyline points="917.80,359.20 962.80,359.20 962.80,292.00" fill="none" stroke="#4a2a0c" stroke-width="1.60" stroke-linejoin="miter"/>
<polyline points="846.80,375.00 846.80,392.00 1007.50,392.00" fill="none" stroke="#5a300c" stroke-width="1.40" stroke-linejoin="miter"/>
<polyline points="913.60,430.00 975.80,430.00" fill="none" stroke="#3c2008" stroke-width="1.30" stroke-linejoin="miter"/>
<polyline points="975.80,430.00 975.80,292.00" fill="none" stroke="#b06018" stroke-width="2.00" stroke-linejoin="miter"/>
<polyline points="846.80,445.60 846.80,464.30 989.20,464.30" fill="none" stroke="#3c2008" stroke-width="1.30" stroke-linejoin="miter"/>
<polyline points="168.00,148.90 517.00,148.90" fill="none" stroke="#111" stroke-width="2.20" />
<polyline points="667.00,148.90 1264.00,148.90" fill="none" stroke="#111" stroke-width="2.20" />
<rect x="517.00" y="138.20" width="29.20" height="21.20" fill="#fff" stroke="#444" stroke-width="0.90"/>
<rect x="546.00" y="140.80" width="121.20" height="16.10" fill="#fff" stroke="#666" stroke-width="0.90"/>
<circle cx="554.40" cy="149.2" r="6.5" fill="#fff" stroke="#222" stroke-width="0.9"/>
<circle cx="569.10" cy="149.2" r="6.5" fill="#fff" stroke="#222" stroke-width="0.9"/>
<circle cx="583.75" cy="149.2" r="6.5" fill="#fff" stroke="#222" stroke-width="0.9"/>
<circle cx="597.80" cy="149.2" r="6.5" fill="#fff" stroke="#222" stroke-width="0.9"/>
<circle cx="612.80" cy="149.2" r="6.5" fill="#fff" stroke="#222" stroke-width="0.9"/>
<circle cx="627.20" cy="149.2" r="6.5" fill="#fff" stroke="#222" stroke-width="0.9"/>
<circle cx="641.60" cy="149.2" r="6.5" fill="#fff" stroke="#222" stroke-width="0.9"/>
<circle cx="656.25" cy="149.2" r="6.5" fill="#fff" stroke="#222" stroke-width="0.9"/>
<rect x="859.50" y="121.80" width="21.70" height="15.70" fill="#fff" stroke="#444" stroke-width="0.90"/>
<polyline points="555.50,157.00 555.50,483.75 538.00,483.75" fill="none" stroke="#1a1a1a" stroke-width="0.90" />
<polygon points="555.50,158.50 553.20,167.00 557.80,167.00" fill="#1c1208"/>
<polygon points="538.20,483.75 546.20,481.45 546.20,486.05" fill="#1c1208"/>
<polygon points="569.20,177.00 566.70,167.50 571.70,167.50" fill="#1c1208"/>
<circle cx="569.20" cy="267.20" r="2.50" fill="#1c1208"/>
<polygon points="583.75,177.00 581.25,167.50 586.25,167.50" fill="#1c1208"/>
<polygon points="597.80,177.00 595.30,167.50 600.30,167.50" fill="#1c1208"/>
<polygon points="612.80,177.00 610.30,167.50 615.30,167.50" fill="#1c1208"/>
<circle cx="597.80" cy="189.70" r="2.50" fill="#1c1208"/>
<circle cx="612.80" cy="189.70" r="2.50" fill="#1c1208"/>
<rect x="610.00" y="210.30" width="5.70" height="16.20" fill="#fff" stroke="#111" stroke-width="1.20"/>
<polyline points="615.00,211.30 610.80,225.50" fill="none" stroke="#111" stroke-width="1.00" />
<polygon points="612.80,246.50 610.30,237.00 615.30,237.00" fill="#1c1208"/>
<polygon points="627.20,177.00 624.70,167.50 629.70,167.50" fill="#1c1208"/>
<polygon points="641.60,177.00 639.10,167.50 644.10,167.50" fill="#1c1208"/>
<polygon points="656.25,177.00 653.75,167.50 658.75,167.50" fill="#1c1208"/>
<circle cx="641.60" cy="189.70" r="2.50" fill="#1c1208"/>
<polygon points="881.00,215.00 870.00,212.00 870.00,218.00" fill="#16283c"/>
<polygon points="881.00,234.50 870.00,231.50 870.00,237.50" fill="#16283c"/>
<polygon points="881.00,254.20 870.00,251.20 870.00,257.20" fill="#16283c"/>
<polygon points="1184.00,251.50 1174.50,249.10 1174.50,253.90" fill="#16283c"/>
<polyline points="883.00,279.30 725.00,279.30 719.50,284.80 719.50,760.00" fill="none" stroke="#111" stroke-width="1.10" />
<polyline points="1114.20,292.00 1114.20,497.50 791.00,497.50" fill="none" stroke="#3a3a3a" stroke-width="1.00" />
<polyline points="791.00,497.50 785.50,503.00 785.50,760.00" fill="none" stroke="#222" stroke-width="1.10" />
<polyline points="218.80,247.50 213.40,253.00 213.40,760.00" fill="none" stroke="#111" stroke-width="1.10" />
<polyline points="218.80,247.50 555.50,247.50" fill="none" stroke="#1a1a1a" stroke-width="0.90" />
<polygon points="547.50,247.50 539.00,245.20 539.00,249.80" fill="#1c1208"/>
<circle cx="555.50" cy="247.50" r="1.80" fill="#1c1208"/>
<polyline points="213.40,272.80 218.80,267.50 387.20,267.50" fill="none" stroke="#333" stroke-width="0.90" />
<circle cx="397.5" cy="273.7" r="10.3" fill="#fff" stroke="#222" stroke-width="0.9"/>
<polyline points="391.80,278.60 403.20,278.60" fill="none" stroke="#111" stroke-width="1.60" />
<polyline points="395.40,278.00 390.00,267.60" fill="none" stroke="#1a1a1a" stroke-width="0.90" />
<polyline points="400.00,278.00 405.60,267.60" fill="none" stroke="#1a1a1a" stroke-width="0.90" />
<polygon points="400.2,277.8 400.4,273.2 403.8,275.2" fill="#111"/>
<polyline points="397.50,278.60 397.50,379.30 415.50,379.30" fill="none" stroke="#333" stroke-width="0.90" />
<path d="M344.6 315.2 H391.2 V321.2 L393.6 323.8 L391.2 326.4 V360.5 H344.6 Z" fill="#fff" stroke="#555" stroke-width="0.9"/>
<circle cx="430.50" cy="267.20" r="2.50" fill="#1c1208"/>
<circle cx="397.50" cy="300.00" r="1.90" fill="#1c1208"/>
<polyline points="397.50,300.00 408.00,300.00" fill="none" stroke="#1a1a1a" stroke-width="0.90" />
<rect x="408.00" y="297.60" width="10.80" height="5.00" fill="#fff" stroke="#2a2a2a" stroke-width="1.00"/>
<polyline points="418.80,300.00 424.00,300.00" fill="none" stroke="#8a4a10" stroke-width="0.90" />
<circle cx="397.50" cy="339.50" r="2.10" fill="#1c1208"/>
<polyline points="397.50,339.50 415.50,339.50" fill="none" stroke="#1a1a1a" stroke-width="0.90" />
<rect x="415.50" y="333.30" width="16.00" height="23.50" fill="#fff" stroke="#333" stroke-width="0.90"/>
<polyline points="415.50,339.50 434.50,339.50" fill="none" stroke="#222" stroke-width="0.90" />
<polygon points="421.90,335.80 428.50,335.80 425.20,343.10" fill="#fff" stroke="#222" stroke-width="0.9"/>
<polyline points="422.70,343.30 427.70,343.30" fill="none" stroke="#222" stroke-width="0.90" />
<polyline points="421.90,339.50 428.50,339.50" fill="none" stroke="#222" stroke-width="0.90" />
<polyline points="415.50,350.00 434.50,350.00" fill="none" stroke="#222" stroke-width="0.90" />
<polygon points="421.90,346.30 428.50,346.30 425.20,353.60" fill="#fff" stroke="#222" stroke-width="0.9"/>
<polyline points="422.70,353.80 427.70,353.80" fill="none" stroke="#222" stroke-width="0.90" />
<polyline points="421.90,350.00 428.50,350.00" fill="none" stroke="#222" stroke-width="0.90" />
<polyline points="418.30,339.50 418.30,350.00" fill="none" stroke="#111" stroke-width="1.00" />
<rect x="415.50" y="372.50" width="16.00" height="23.70" fill="#fff" stroke="#333" stroke-width="0.90"/>
<polyline points="415.50,379.30 434.50,379.30" fill="none" stroke="#222" stroke-width="0.90" />
<polygon points="421.90,375.60 428.50,375.60 425.20,382.90" fill="#fff" stroke="#222" stroke-width="0.9"/>
<polyline points="422.70,383.10 427.70,383.10" fill="none" stroke="#222" stroke-width="0.90" />
<polyline points="421.90,379.30 428.50,379.30" fill="none" stroke="#222" stroke-width="0.90" />
<polyline points="415.50,389.30 434.50,389.30" fill="none" stroke="#222" stroke-width="0.90" />
<polygon points="421.90,385.60 428.50,385.60 425.20,392.90" fill="#fff" stroke="#222" stroke-width="0.9"/>
<polyline points="422.70,393.10 427.70,393.10" fill="none" stroke="#222" stroke-width="0.90" />
<polyline points="421.90,389.30 428.50,389.30" fill="none" stroke="#222" stroke-width="0.90" />
<polyline points="418.30,379.30 418.30,389.30" fill="none" stroke="#111" stroke-width="1.00" />
<circle cx="612.80" cy="339.50" r="2.50" fill="#1c1208"/>
<circle cx="627.50" cy="339.50" r="2.50" fill="#1c1208"/>
<circle cx="766.70" cy="339.50" r="2.50" fill="#1c1208"/>
<polygon points="822.50,339.40 812.50,336.80 812.50,342.00" fill="#1c1208"/>
<circle cx="766.70" cy="330.40" r="4.00" fill="#fff" stroke="#333" stroke-width="0.9"/>
<polyline points="760.30,330.40 773.10,330.40" fill="none" stroke="#333" stroke-width="0.90" />
<circle cx="351.20" cy="411.50" r="2.50" fill="#1c1208"/>
<circle cx="351.20" cy="483.80" r="2.50" fill="#1c1208"/>
<circle cx="351.20" cy="402.50" r="4.00" fill="#fff" stroke="#333" stroke-width="0.9"/>
<polyline points="344.80,402.50 357.60,402.50" fill="none" stroke="#333" stroke-width="0.90" />
<circle cx="601.70" cy="563.00" r="2.50" fill="#1c1208"/>
<circle cx="601.70" cy="733.80" r="2.50" fill="#1c1208"/>
<circle cx="614.60" cy="589.30" r="2.50" fill="#1c1208"/>
<circle cx="614.60" cy="707.50" r="2.50" fill="#1c1208"/>
<circle cx="614.60" cy="430.00" r="2.50" fill="#1c1208"/>
<polygon points="822.50,430.00 812.50,427.40 812.50,432.60" fill="#1c1208"/>
<circle cx="766.70" cy="421.30" r="4.00" fill="#fff" stroke="#333" stroke-width="0.9"/>
<polyline points="760.30,421.30 773.10,421.30" fill="none" stroke="#333" stroke-width="0.90" />
<circle cx="766.70" cy="430.00" r="2.50" fill="#1c1208"/>
<circle cx="175.2" cy="681.30" r="6.7" fill="#fff" stroke="#222" stroke-width="1.0"/>
<circle cx="175.2" cy="707.50" r="6.7" fill="#fff" stroke="#222" stroke-width="1.0"/>
<circle cx="175.2" cy="733.80" r="6.7" fill="#fff" stroke="#222" stroke-width="1.0"/>
<circle cx="175.2" cy="760.20" r="6.7" fill="#fff" stroke="#222" stroke-width="1.0"/>
<rect x="476.30" y="426.60" width="52.70" height="15.90" fill="#fff" stroke="#555" stroke-width="0.90"/>
<rect x="469.60" y="471.30" width="65.90" height="157.50" fill="none" stroke="#222" stroke-width="1.20"/>
<path d="M362.50 484.20 a2.50 2.90 0 0 1 5.00 0 a2.50 2.90 0 0 1 5.00 0 a2.50 2.90 0 0 1 5.00 0 a2.50 2.90 0 0 1 5.00 0" fill="none" stroke="#222" stroke-width="0.9"/>
<path d="M440.00 484.20 a2.50 2.90 0 0 1 5.00 0 a2.50 2.90 0 0 1 5.00 0 a2.50 2.90 0 0 1 5.00 0 a2.50 2.90 0 0 1 5.00 0" fill="none" stroke="#222" stroke-width="0.9"/>
<rect x="401.30" y="479.30" width="18.30" height="10.00" fill="#fff" stroke="#333" stroke-width="0.90"/>
<polyline points="401.30,483.80 419.60,483.80" fill="none" stroke="#2a2a2a" stroke-width="1.00" />
<polygon points="414.3,480.8 414.3,486.8 408.3,483.8" fill="#fff" stroke="#222" stroke-width="0.8"/>
<polyline points="408.00,480.60 408.00,487.00" fill="none" stroke="#222" stroke-width="0.90" />
<circle cx="393.00" cy="483.80" r="2.50" fill="#1c1208"/>
<circle cx="427.50" cy="483.80" r="2.50" fill="#1c1208"/>
<circle cx="435.50" cy="483.80" r="2.50" fill="#1c1208"/>
<polyline points="393.00,483.80 393.00,517.00" fill="none" stroke="#111" stroke-width="0.90" />
<polygon points="393,498.5 389.8,504.5 396.2,504.5" fill="#fff" stroke="#222" stroke-width="0.8"/>
<polyline points="389.50,498.50 396.50,498.50" fill="none" stroke="#222" stroke-width="0.90" />
<polyline points="388.50,517.30 397.80,517.30" fill="none" stroke="#222" stroke-width="0.90" />
<polyline points="389.00,520.80 391.40,517.30" fill="none" stroke="#222" stroke-width="0.80" />
<polyline points="392.30,520.80 394.70,517.30" fill="none" stroke="#222" stroke-width="0.80" />
<polyline points="395.60,520.80 398.00,517.30" fill="none" stroke="#222" stroke-width="0.80" />
<polygon points="447.00,506.30 455.00,504.10 455.00,508.50" fill="#1c1208"/>
<polygon points="447.00,536.70 455.00,534.50 455.00,538.90" fill="#1c1208"/>
<circle cx="397.50" cy="536.80" r="2.50" fill="#1c1208"/>
<circle cx="759.20" cy="681.30" r="2.50" fill="#1c1208"/>
<circle cx="397.50" cy="527.40" r="4.00" fill="#fff" stroke="#333" stroke-width="0.9"/>
<polyline points="391.10,527.40 403.90,527.40" fill="none" stroke="#333" stroke-width="0.90" />
<circle cx="758.80" cy="672.60" r="4.00" fill="#fff" stroke="#333" stroke-width="0.9"/>
<polyline points="752.40,672.60 765.20,672.60" fill="none" stroke="#333" stroke-width="0.90" />
<rect x="282.60" y="505.00" width="53.20" height="15.80" fill="#fff" stroke="#555" stroke-width="0.90"/>
<rect x="289.30" y="526.20" width="40.20" height="21.00" fill="#fff" stroke="#1a1a1a" stroke-width="1.50"/>
<polyline points="329.00,536.80 384.00,536.80" fill="none" stroke="#3a3a3a" stroke-width="1.00" />
<circle cx="338.30" cy="536.80" r="1.80" fill="#1c1208"/>
<polygon points="378.5,533.6 378.5,540 372,536.8" fill="#fff" stroke="#222" stroke-width="0.8"/>
<polyline points="371.70,533.40 371.70,540.20" fill="none" stroke="#222" stroke-width="0.90" />
<circle cx="289.40" cy="536.80" r="2.65" fill="#fff" stroke="#1a1a1a" stroke-width="0.9"/>
<circle cx="328.90" cy="536.80" r="2.65" fill="#fff" stroke="#1a1a1a" stroke-width="0.9"/>
<polyline points="289.40,536.80 279.30,536.80 279.30,563.00" fill="none" stroke="#2a2a2a" stroke-width="1.00" />
<polygon points="279.30,548.50 277.00,540.00 281.60,540.00" fill="#1c1208"/>
<circle cx="279.30" cy="563.00" r="1.90" fill="#1c1208"/>
<polyline points="213.40,568.30 218.80,563.00 467.50,563.00" fill="none" stroke="#3a3a3a" stroke-width="1.00" />
<polygon points="283.00,563.00 292.00,560.60 292.00,565.40" fill="#1c1208"/>
<polygon points="443.00,563.00 452.00,560.60 452.00,565.40" fill="#1c1208"/>
<polyline points="213.40,594.60 218.80,589.30 338.30,589.30 338.30,536.80" fill="none" stroke="#2a2a2a" stroke-width="1.00" />
<polygon points="284.50,589.30 275.50,586.90 275.50,591.70" fill="#1c1208"/>
<polygon points="306.6,585.8 306.6,592.8 313,589.3" fill="#fff" stroke="#222" stroke-width="0.9"/>
<polyline points="313.30,585.60 313.30,593.00" fill="none" stroke="#222" stroke-width="1.00" />
<polyline points="441.00,578.30 441.00,597.70" fill="none" stroke="#111" stroke-width="2.80" />
<polyline points="441.00,584.80 445.00,589.30 467.50,589.30" fill="none" stroke="#222" stroke-width="0.90" />
<polygon points="446.00,589.30 455.00,586.70 455.00,591.90" fill="#1c1208"/>
<polygon points="466.60,589.30 457.60,586.70 457.60,591.90" fill="#1c1208"/>
<polyline points="441.00,604.50 441.00,623.90" fill="none" stroke="#111" stroke-width="2.80" />
<polyline points="441.00,611.00 445.00,615.50 467.50,615.50" fill="none" stroke="#222" stroke-width="0.90" />
<polygon points="446.00,615.50 455.00,612.90 455.00,618.10" fill="#1c1208"/>
<polygon points="466.60,615.50 457.60,612.90 457.60,618.10" fill="#1c1208"/>
<polyline points="564.00,604.40 564.00,624.00" fill="none" stroke="#111" stroke-width="2.80" />
<polyline points="564.00,621.00 560.00,615.50 538.00,615.50" fill="none" stroke="#222" stroke-width="0.90" />
<polygon points="538.60,615.50 547.60,612.90 547.60,618.10" fill="#1c1208"/>
<polygon points="559.00,615.50 550.00,612.90 550.00,618.10" fill="#1c1208"/>
<polygon points="538.50,536.40 548.50,533.80 548.50,539.00" fill="#1c1208"/>
<polygon points="538.50,563.00 548.50,560.40 548.50,565.60" fill="#1c1208"/>
<polygon points="538.50,589.30 548.50,586.70 548.50,591.90" fill="#1c1208"/>
<circle cx="567.60" cy="527.60" r="4.00" fill="#fff" stroke="#333" stroke-width="0.9"/>
<polyline points="561.20,527.60 574.00,527.60" fill="none" stroke="#333" stroke-width="0.90" />
<circle cx="567.60" cy="536.60" r="2.40" fill="#1c1208"/>
<circle cx="567.60" cy="553.60" r="4.00" fill="#fff" stroke="#333" stroke-width="0.9"/>
<polyline points="561.20,553.60 574.00,553.60" fill="none" stroke="#333" stroke-width="0.90" />
<circle cx="567.60" cy="562.60" r="2.40" fill="#1c1208"/>
<circle cx="567.60" cy="580.00" r="4.00" fill="#fff" stroke="#333" stroke-width="0.9"/>
<polyline points="561.20,580.00 574.00,580.00" fill="none" stroke="#333" stroke-width="0.90" />
<circle cx="567.60" cy="589.00" r="2.40" fill="#1c1208"/>
<rect x="485.60" y="527.60" width="36.90" height="18.60" fill="#fff" stroke="#333" stroke-width="0.90"/>
<polyline points="469.60,536.70 485.60,536.70" fill="none" stroke="#2a2a2a" stroke-width="1.00" />
<polygon points="472.50,536.70 476.50,535.20 476.50,538.20" fill="#1c1208"/>
<polyline points="522.50,536.60 535.50,536.60" fill="none" stroke="#2a2a2a" stroke-width="1.00" />
<rect x="486.30" y="556.80" width="33.70" height="18.20" fill="#fff" stroke="#555" stroke-width="0.90"/>
<circle cx="469.60" cy="483.80" r="2.65" fill="#fff" stroke="#1a1a1a" stroke-width="0.9"/>
<circle cx="469.60" cy="506.30" r="2.65" fill="#fff" stroke="#1a1a1a" stroke-width="0.9"/>
<circle cx="469.60" cy="536.70" r="2.65" fill="#fff" stroke="#1a1a1a" stroke-width="0.9"/>
<circle cx="469.60" cy="563.00" r="2.65" fill="#fff" stroke="#1a1a1a" stroke-width="0.9"/>
<circle cx="469.60" cy="589.30" r="2.65" fill="#fff" stroke="#1a1a1a" stroke-width="0.9"/>
<circle cx="469.60" cy="615.50" r="2.65" fill="#fff" stroke="#1a1a1a" stroke-width="0.9"/>
<circle cx="535.50" cy="483.80" r="2.65" fill="#fff" stroke="#1a1a1a" stroke-width="0.9"/>
<circle cx="535.50" cy="536.50" r="2.65" fill="#fff" stroke="#1a1a1a" stroke-width="0.9"/>
<circle cx="535.50" cy="563.00" r="2.65" fill="#fff" stroke="#1a1a1a" stroke-width="0.9"/>
<circle cx="535.50" cy="589.30" r="2.65" fill="#fff" stroke="#1a1a1a" stroke-width="0.9"/>
<circle cx="535.50" cy="615.50" r="2.65" fill="#fff" stroke="#1a1a1a" stroke-width="0.9"/>
<rect x="982.00" y="180.60" width="54.30" height="15.70" fill="#fff" stroke="#555" stroke-width="0.90"/>
<rect x="883.30" y="201.30" width="276.70" height="88.10" fill="none" stroke="#222" stroke-width="1.20"/>
<polygon points="861.00,279.30 869.00,277.10 869.00,281.50" fill="#1c1208"/>
<polygon points="879.50,279.30 871.50,277.10 871.50,281.50" fill="#1c1208"/>
<circle cx="883.30" cy="215.00" r="2.65" fill="#fff" stroke="#1a1a1a" stroke-width="0.9"/>
<circle cx="883.30" cy="234.50" r="2.65" fill="#fff" stroke="#1a1a1a" stroke-width="0.9"/>
<circle cx="883.30" cy="254.20" r="2.65" fill="#fff" stroke="#1a1a1a" stroke-width="0.9"/>
<circle cx="883.30" cy="279.30" r="2.65" fill="#fff" stroke="#1a1a1a" stroke-width="0.9"/>
<polyline points="1094.20,292.00 1094.20,339.50 1064.00,339.50" fill="none" stroke="#3a3a3a" stroke-width="1.00" />
<polygon points="1094.20,292.50 1091.90,301.00 1096.50,301.00" fill="#1c1208"/>
<polygon points="1094.20,316.50 1091.90,308.00 1096.50,308.00" fill="#1c1208"/>
<polygon points="1066.00,339.50 1074.00,337.20 1074.00,341.80" fill="#1c1208"/>
<polygon points="1088.00,339.50 1080.00,337.20 1080.00,341.80" fill="#1c1208"/>
<polygon points="1114.20,292.50 1111.90,301.00 1116.50,301.00" fill="#1c1208"/>
<rect x="824.50" y="306.80" width="53.00" height="15.70" fill="#fff" stroke="#555" stroke-width="0.90"/>
<rect x="824.30" y="326.80" width="91.20" height="45.70" fill="none" stroke="#1a1a1a" stroke-width="1.40"/>
<rect x="831.30" y="331.30" width="31.20" height="16.20" fill="#fff" stroke="#444" stroke-width="0.90"/>
<circle cx="836.50" cy="339.50" r="2.20" fill="#fff" stroke="#1a1a1a" stroke-width="0.9"/>
<circle cx="857.30" cy="339.50" r="2.20" fill="#fff" stroke="#1a1a1a" stroke-width="0.9"/>
<polyline points="838.70,337.90 858.00,332.90" fill="none" stroke="#222" stroke-width="1.00" />
<polyline points="846.80,335.90 846.80,342.10" fill="none" stroke="#111" stroke-width="1.60" />
<polyline points="824.30,339.50 834.50,339.50" fill="none" stroke="#2a2a2a" stroke-width="1.00" />
<polyline points="846.80,343.00 846.80,372.50" fill="none" stroke="#666" stroke-width="0.90" stroke-dasharray="4.5 2.2"/>
<polyline points="859.30,339.50 870.50,339.50" fill="none" stroke="#2a2a2a" stroke-width="1.00" />
<polyline points="866.60,339.50 866.60,359.20 870.50,359.20" fill="none" stroke="#555" stroke-width="0.80" />
<rect x="870.50" y="333.00" width="32.00" height="13.20" fill="#fff" stroke="#666" stroke-width="0.90"/>
<rect x="870.50" y="352.60" width="32.00" height="13.60" fill="#fff" stroke="#666" stroke-width="0.90"/>
<polyline points="902.50,339.50 915.50,339.50" fill="none" stroke="#2a2a2a" stroke-width="1.00" />
<polyline points="902.50,359.20 915.50,359.20" fill="none" stroke="#2a2a2a" stroke-width="1.00" />
<polygon points="910.50,339.50 906.50,338.00 906.50,341.00" fill="#1c1208"/>
<polygon points="910.50,359.20 906.50,357.70 906.50,360.70" fill="#1c1208"/>
<polygon points="945.50,339.40 935.50,336.80 935.50,342.00" fill="#1c1208"/>
<polygon points="1007.50,339.40 997.50,336.80 997.50,342.00" fill="#1c1208"/>
<polygon points="945.50,359.20 935.50,356.60 935.50,361.80" fill="#1c1208"/>
<circle cx="949.50" cy="339.50" r="1.90" fill="#1c1208"/>
<polygon points="949.50,292.30 946.90,302.30 952.10,302.30" fill="#1c1208"/>
<polygon points="962.80,292.30 960.20,302.30 965.40,302.30" fill="#1c1208"/>
<polygon points="975.80,292.30 973.20,302.30 978.40,302.30" fill="#1c1208"/>
<polygon points="989.20,292.30 986.60,302.30 991.80,302.30" fill="#1c1208"/>
<polygon points="846.80,375.20 844.20,385.20 849.40,385.20" fill="#1c1208"/>
<polygon points="1007.50,392.00 997.50,389.40 997.50,394.60" fill="#1c1208"/>
<circle cx="989.20" cy="392.00" r="2.50" fill="#1c1208"/>
<circle cx="824.30" cy="339.50" r="2.65" fill="#fff" stroke="#1a1a1a" stroke-width="0.9"/>
<circle cx="915.50" cy="339.50" r="2.65" fill="#fff" stroke="#1a1a1a" stroke-width="0.9"/>
<circle cx="915.50" cy="359.20" r="2.65" fill="#fff" stroke="#1a1a1a" stroke-width="0.9"/>
<circle cx="846.80" cy="372.50" r="2.65" fill="#fff" stroke="#1a1a1a" stroke-width="0.9"/>
<rect x="995.00" y="310.60" width="82.50" height="15.70" fill="#fff" stroke="#555" stroke-width="0.90"/>
<rect x="1010.50" y="332.30" width="53.50" height="18.20" fill="#fff" stroke="#222" stroke-width="1.00"/>
<rect x="1008.40" y="330.10" width="53.40" height="18.20" fill="#fff" stroke="#222" stroke-width="1.20"/>
<circle cx="1008.60" cy="339.50" r="2.65" fill="#fff" stroke="#1a1a1a" stroke-width="0.9"/>
<circle cx="1061.50" cy="339.50" r="2.65" fill="#fff" stroke="#1a1a1a" stroke-width="0.9"/>
<rect x="1025.80" y="364.60" width="52.50" height="15.90" fill="#fff" stroke="#555" stroke-width="0.90"/>
<rect x="1009.60" y="384.30" width="86.20" height="15.70" fill="#fff" stroke="#222" stroke-width="1.40"/>
<circle cx="1009.60" cy="392.00" r="2.65" fill="#fff" stroke="#1a1a1a" stroke-width="0.9"/>
<rect x="828.30" y="397.60" width="53.50" height="15.70" fill="#fff" stroke="#555" stroke-width="0.90"/>
<rect x="824.30" y="417.10" width="87.50" height="26.20" fill="none" stroke="#1a1a1a" stroke-width="1.40"/>
<rect x="831.30" y="422.50" width="31.20" height="15.80" fill="#fff" stroke="#444" stroke-width="0.90"/>
<circle cx="836.50" cy="430.00" r="2.20" fill="#fff" stroke="#1a1a1a" stroke-width="0.9"/>
<circle cx="857.30" cy="430.00" r="2.20" fill="#fff" stroke="#1a1a1a" stroke-width="0.9"/>
<polyline points="838.70,428.40 858.00,424.10" fill="none" stroke="#222" stroke-width="1.00" />
<polyline points="846.80,426.40 846.80,432.60" fill="none" stroke="#111" stroke-width="1.60" />
<polyline points="824.30,430.00 834.50,430.00" fill="none" stroke="#2a2a2a" stroke-width="1.00" />
<polyline points="859.30,430.00 866.30,430.00" fill="none" stroke="#2a2a2a" stroke-width="1.00" />
<rect x="866.30" y="423.30" width="32.50" height="13.70" fill="#fff" stroke="#666" stroke-width="0.90"/>
<polyline points="898.80,430.00 911.30,430.00" fill="none" stroke="#2a2a2a" stroke-width="1.00" />
<polygon points="907.00,430.00 903.00,428.50 903.00,431.50" fill="#1c1208"/>
<polygon points="949.50,430.00 939.50,427.40 939.50,432.60" fill="#1c1208"/>
<polygon points="846.80,445.80 844.20,455.80 849.40,455.80" fill="#1c1208"/>
<circle cx="952.00" cy="464.30" r="2.50" fill="#1c1208"/>
<circle cx="989.20" cy="464.30" r="2.50" fill="#1c1208"/>
<circle cx="952.00" cy="455.30" r="4.00" fill="#fff" stroke="#333" stroke-width="0.9"/>
<polyline points="945.60,455.30 958.40,455.30" fill="none" stroke="#333" stroke-width="0.90" />
<circle cx="824.30" cy="430.00" r="2.65" fill="#fff" stroke="#1a1a1a" stroke-width="0.9"/>
<circle cx="911.30" cy="430.00" r="2.65" fill="#fff" stroke="#1a1a1a" stroke-width="0.9"/>
<circle cx="846.80" cy="443.30" r="2.65" fill="#fff" stroke="#1a1a1a" stroke-width="0.9"/>
<circle cx="949.50" cy="289.50" r="2.65" fill="#fff" stroke="#1a1a1a" stroke-width="0.9"/>
<circle cx="962.80" cy="289.50" r="2.65" fill="#fff" stroke="#1a1a1a" stroke-width="0.9"/>
<circle cx="975.80" cy="289.50" r="2.65" fill="#fff" stroke="#1a1a1a" stroke-width="0.9"/>
<circle cx="989.20" cy="289.50" r="2.65" fill="#fff" stroke="#1a1a1a" stroke-width="0.9"/>
<circle cx="1094.20" cy="289.50" r="2.65" fill="#fff" stroke="#1a1a1a" stroke-width="0.9"/>
<circle cx="1114.20" cy="289.50" r="2.65" fill="#fff" stroke="#1a1a1a" stroke-width="0.9"/>
<circle cx="1160.00" cy="251.50" r="2.65" fill="#fff" stroke="#1a1a1a" stroke-width="0.9"/>
<circle cx="1263.00" cy="382.00" r="1.50" fill="#1c1208"/>
<rect x="936.30" y="648.30" width="235.70" height="151.70" fill="none" stroke="#222" stroke-width="1.20"/>
<polyline points="785.50,706.60 791.00,701.30 936.30,701.30" fill="none" stroke="#444" stroke-width="0.90" />
<polyline points="785.50,728.80 791.00,723.50 936.30,723.50" fill="none" stroke="#222" stroke-width="0.90" />
<polyline points="785.50,751.00 791.00,745.70 936.30,745.70" fill="none" stroke="#333" stroke-width="0.90" />
<polygon points="907.50,701.30 917.50,698.90 917.50,703.70" fill="#1c1208"/>
<polygon points="933.00,701.30 923.00,698.90 923.00,703.70" fill="#1c1208"/>
<polygon points="907.50,723.50 917.50,721.10 917.50,725.90" fill="#1c1208"/>
<polygon points="933.00,723.50 923.00,721.10 923.00,725.90" fill="#1c1208"/>
<polygon points="933.00,745.70 923.00,743.30 923.00,748.10" fill="#1c1208"/>
<polyline points="936.30,678.80 897.50,678.80" fill="none" stroke="#3a3a3a" stroke-width="1.00" />
<polyline points="878.30,678.80 870.50,678.80 870.50,701.30" fill="none" stroke="#3a3a3a" stroke-width="1.00" />
<rect x="878.30" y="673.80" width="19.20" height="10.00" fill="#fff" stroke="#333" stroke-width="0.90"/>
<polyline points="878.30,678.80 897.50,678.80" fill="none" stroke="#2a2a2a" stroke-width="1.00" />
<polygon points="890.3,675.8 890.3,681.8 884.3,678.8" fill="#fff" stroke="#222" stroke-width="0.8"/>
<polyline points="884.00,675.60 884.00,682.00" fill="none" stroke="#222" stroke-width="0.90" />
<polyline points="897.50,675.60 903.70,675.60 903.70,678.80" fill="none" stroke="#2a2a2a" stroke-width="1.00" />
<circle cx="903.70" cy="678.80" r="1.90" fill="#1c1208"/>
<circle cx="870.50" cy="701.30" r="1.90" fill="#1c1208"/>
<polygon points="907.50,678.80 917.50,676.40 917.50,681.20" fill="#1c1208"/>
<circle cx="936.30" cy="678.80" r="2.65" fill="#fff" stroke="#1a1a1a" stroke-width="0.9"/>
<circle cx="936.30" cy="701.30" r="2.65" fill="#fff" stroke="#1a1a1a" stroke-width="0.9"/>
<circle cx="936.30" cy="723.50" r="2.65" fill="#fff" stroke="#1a1a1a" stroke-width="0.9"/>
<circle cx="936.30" cy="745.70" r="2.65" fill="#fff" stroke="#1a1a1a" stroke-width="0.9"/>
<text x="524.60" y="122.60" font-size="8.50" text-anchor="start" fill="#2a2a2a" stroke="#2a2a2a" stroke-width="0.28" textLength="12.30" lengthAdjust="spacingAndGlyphs">P6</text>
<text x="524.60" y="134.80" font-size="8.50" text-anchor="start" fill="#2a2a2a" stroke="#2a2a2a" stroke-width="0.28" textLength="12.30" lengthAdjust="spacingAndGlyphs">P7</text>
<text x="524.40" y="153.70" font-size="8.50" text-anchor="start" fill="#2a2a2a" stroke="#2a2a2a" stroke-width="0.28" textLength="12.50" lengthAdjust="spacingAndGlyphs">A6</text>
<text x="554.40" y="151.90" font-size="7.20" text-anchor="middle" fill="#222" stroke="#222" stroke-width="0.28">14</text>
<text x="569.10" y="151.90" font-size="7.20" text-anchor="middle" fill="#222" stroke="#222" stroke-width="0.28">13</text>
<text x="583.75" y="151.90" font-size="7.20" text-anchor="middle" fill="#222" stroke="#222" stroke-width="0.28">9</text>
<text x="597.80" y="151.90" font-size="7.20" text-anchor="middle" fill="#222" stroke="#222" stroke-width="0.28">8</text>
<text x="612.80" y="151.90" font-size="7.20" text-anchor="middle" fill="#222" stroke="#222" stroke-width="0.28">7</text>
<text x="627.20" y="151.90" font-size="7.20" text-anchor="middle" fill="#222" stroke="#222" stroke-width="0.28">3</text>
<text x="641.60" y="151.90" font-size="7.20" text-anchor="middle" fill="#222" stroke="#222" stroke-width="0.28">2</text>
<text x="656.25" y="151.90" font-size="7.20" text-anchor="middle" fill="#222" stroke="#222" stroke-width="0.28">1</text>
<text x="557.80" y="136.50" font-size="8.30" text-anchor="start" fill="#2a2a2a" stroke="#2a2a2a" stroke-width="0.28" textLength="49.00" lengthAdjust="spacingAndGlyphs" transform="rotate(-90 557.80 136.50)">TV SUB ON</text>
<text x="572.80" y="136.50" font-size="8.30" text-anchor="start" fill="#2a2a2a" stroke="#2a2a2a" stroke-width="0.28" textLength="30.00" lengthAdjust="spacingAndGlyphs" transform="rotate(-90 572.80 136.50)">STB5V</text>
<text x="588.10" y="136.50" font-size="8.30" text-anchor="start" fill="#2a2a2a" stroke="#2a2a2a" stroke-width="0.28" textLength="21.50" lengthAdjust="spacingAndGlyphs" transform="rotate(-90 588.10 136.50)">F15V</text>
<text x="602.20" y="136.50" font-size="8.30" text-anchor="start" fill="#2a2a2a" stroke="#2a2a2a" stroke-width="0.28" textLength="21.50" lengthAdjust="spacingAndGlyphs" transform="rotate(-90 602.20 136.50)">F15V</text>
<text x="617.20" y="136.50" font-size="8.30" text-anchor="start" fill="#2a2a2a" stroke="#2a2a2a" stroke-width="0.28" textLength="21.50" lengthAdjust="spacingAndGlyphs" transform="rotate(-90 617.20 136.50)">F15V</text>
<text x="631.30" y="136.50" font-size="8.30" text-anchor="start" fill="#2a2a2a" stroke="#2a2a2a" stroke-width="0.28" textLength="50.00" lengthAdjust="spacingAndGlyphs" transform="rotate(-90 631.30 136.50)">SOUND15V</text>
<text x="646.40" y="136.50" font-size="8.30" text-anchor="start" fill="#2a2a2a" stroke="#2a2a2a" stroke-width="0.28" textLength="50.00" lengthAdjust="spacingAndGlyphs" transform="rotate(-90 646.40 136.50)">SOUND15V</text>
<text x="660.60" y="136.50" font-size="8.30" text-anchor="start" fill="#2a2a2a" stroke="#2a2a2a" stroke-width="0.28" textLength="50.00" lengthAdjust="spacingAndGlyphs" transform="rotate(-90 660.60 136.50)">SOUND15V</text>
<text x="870.30" y="133.60" font-size="10.00" text-anchor="middle" fill="#2a2a2a" stroke="#2a2a2a" stroke-width="0.28" textLength="7.60" lengthAdjust="spacingAndGlyphs">A</text>
<text x="887.60" y="132.80" font-size="11.50" text-anchor="start" fill="#2a2a2a" stroke="#2a2a2a" stroke-width="0.28" textLength="182.00" lengthAdjust="spacingAndGlyphs">DIGITAL SIGNAL PROCESSOR</text>
<text x="607.20" y="236.00" font-size="8.30" text-anchor="start" fill="#2a2a2a" stroke="#2a2a2a" stroke-width="0.28" textLength="33.00" lengthAdjust="spacingAndGlyphs" transform="rotate(-90 607.20 236.00)">PA5601</text>
<text x="218.50" y="245.00" font-size="8.30" text-anchor="start" fill="#2a2a2a" stroke="#2a2a2a" stroke-width="0.28" textLength="50.00" lengthAdjust="spacingAndGlyphs">TV SUB ON</text>
<text x="218.50" y="265.00" font-size="8.30" text-anchor="start" fill="#2a2a2a" stroke="#2a2a2a" stroke-width="0.28" textLength="54.50" lengthAdjust="spacingAndGlyphs">TUNER SOS</text>
<text x="217.60" y="279.50" font-size="8.50" text-anchor="start" fill="#5a2a08" stroke="#5a2a08" stroke-width="0.28" textLength="65.50" lengthAdjust="spacingAndGlyphs" font-weight="bold">(LED:10TIMES)</text>
<text x="342.00" y="280.60" font-size="9.60" text-anchor="start" fill="#2a2a2a" stroke="#2a2a2a" stroke-width="0.28" textLength="33.00" lengthAdjust="spacingAndGlyphs">Q5522</text>
<text x="333.30" y="292.20" font-size="8.30" text-anchor="start" fill="#2a2a2a" stroke="#2a2a2a" stroke-width="0.28" textLength="44.70" lengthAdjust="spacingAndGlyphs">VOLTAGE</text>
<text x="334.00" y="301.00" font-size="8.30" text-anchor="start" fill="#2a2a2a" stroke="#2a2a2a" stroke-width="0.28" textLength="26.00" lengthAdjust="spacingAndGlyphs">DROP</text>
<text x="334.00" y="311.30" font-size="8.30" text-anchor="start" fill="#2a2a2a" stroke="#2a2a2a" stroke-width="0.28" textLength="55.00" lengthAdjust="spacingAndGlyphs">ERROR DET</text>
<text x="352.30" y="325.00" font-size="8.30" text-anchor="start" fill="#2a2a2a" stroke="#2a2a2a" stroke-width="0.28" textLength="21.50" lengthAdjust="spacingAndGlyphs">F15V</text>
<text x="352.30" y="335.80" font-size="8.30" text-anchor="start" fill="#2a2a2a" stroke="#2a2a2a" stroke-width="0.28" textLength="31.00" lengthAdjust="spacingAndGlyphs">SUB9V</text>
<text x="352.30" y="346.20" font-size="8.30" text-anchor="start" fill="#2a2a2a" stroke="#2a2a2a" stroke-width="0.28" textLength="31.00" lengthAdjust="spacingAndGlyphs">SUB5V</text>
<text x="352.30" y="357.00" font-size="8.30" text-anchor="start" fill="#2a2a2a" stroke="#2a2a2a" stroke-width="0.28" textLength="28.50" lengthAdjust="spacingAndGlyphs">BT30V</text>
<text x="409.50" y="332.00" font-size="8.30" text-anchor="start" fill="#2a2a2a" stroke="#2a2a2a" stroke-width="0.28" textLength="26.50" lengthAdjust="spacingAndGlyphs">D5521</text>
<text x="409.50" y="371.00" font-size="8.30" text-anchor="start" fill="#2a2a2a" stroke="#2a2a2a" stroke-width="0.28" textLength="26.50" lengthAdjust="spacingAndGlyphs">D5522</text>
<text x="447.50" y="336.00" font-size="8.30" text-anchor="start" fill="#2a2a2a" stroke="#2a2a2a" stroke-width="0.28" textLength="21.30" lengthAdjust="spacingAndGlyphs">F15V</text>
<text x="447.50" y="362.20" font-size="8.30" text-anchor="start" fill="#2a2a2a" stroke="#2a2a2a" stroke-width="0.28" textLength="28.30" lengthAdjust="spacingAndGlyphs">BT30V</text>
<text x="447.50" y="376.30" font-size="8.30" text-anchor="start" fill="#2a2a2a" stroke="#2a2a2a" stroke-width="0.28" textLength="30.50" lengthAdjust="spacingAndGlyphs">SUB9V</text>
<text x="447.50" y="401.00" font-size="8.30" text-anchor="start" fill="#2a2a2a" stroke="#2a2a2a" stroke-width="0.28" textLength="30.50" lengthAdjust="spacingAndGlyphs">SUB5V</text>
<text x="766.70" y="324.20" font-size="8.30" text-anchor="middle" fill="#2a2a2a" stroke="#2a2a2a" stroke-width="0.28" textLength="21.30" lengthAdjust="spacingAndGlyphs">F15V</text>
<text x="335.00" y="396.30" font-size="8.30" text-anchor="start" fill="#2a2a2a" stroke="#2a2a2a" stroke-width="0.28" textLength="28.70" lengthAdjust="spacingAndGlyphs">BT30V</text>
<text x="766.70" y="416.20" font-size="8.30" text-anchor="middle" fill="#2a2a2a" stroke="#2a2a2a" stroke-width="0.28" textLength="31.00" lengthAdjust="spacingAndGlyphs">SUB5V</text>
<text x="175.20" y="684.00" font-size="7.40" text-anchor="middle" fill="#222" stroke="#222" stroke-width="0.28">1</text>
<text x="175.20" y="710.20" font-size="7.40" text-anchor="middle" fill="#222" stroke="#222" stroke-width="0.28">2</text>
<text x="175.20" y="736.50" font-size="7.40" text-anchor="middle" fill="#222" stroke="#222" stroke-width="0.28">3</text>
<text x="175.20" y="762.90" font-size="7.40" text-anchor="middle" fill="#222" stroke="#222" stroke-width="0.28">4</text>
<text x="262.00" y="677.30" font-size="8.30" text-anchor="start" fill="#2a2a2a" stroke="#2a2a2a" stroke-width="0.28" textLength="28.50" lengthAdjust="spacingAndGlyphs">BT30V</text>
<text x="262.30" y="704.20" font-size="8.30" text-anchor="start" fill="#2a2a2a" stroke="#2a2a2a" stroke-width="0.28" textLength="30.00" lengthAdjust="spacingAndGlyphs">SUB5V</text>
<text x="262.30" y="730.20" font-size="8.30" text-anchor="start" fill="#2a2a2a" stroke="#2a2a2a" stroke-width="0.28" textLength="30.00" lengthAdjust="spacingAndGlyphs">SUB9V</text>
<text x="257.00" y="756.20" font-size="8.30" text-anchor="start" fill="#2a2a2a" stroke="#2a2a2a" stroke-width="0.28" textLength="38.50" lengthAdjust="spacingAndGlyphs">SUB3.3V</text>
<text x="481.50" y="438.80" font-size="10.60" text-anchor="start" fill="#2a2a2a" stroke="#2a2a2a" stroke-width="0.28" textLength="40.30" lengthAdjust="spacingAndGlyphs">IC5480</text>
<text x="472.50" y="455.00" font-size="9.50" text-anchor="start" fill="#2a2a2a" stroke="#2a2a2a" stroke-width="0.28" textLength="43.00" lengthAdjust="spacingAndGlyphs">STB3.3V</text>
<text x="472.50" y="466.00" font-size="9.50" text-anchor="start" fill="#2a2a2a" stroke="#2a2a2a" stroke-width="0.28" textLength="63.00" lengthAdjust="spacingAndGlyphs">STB_RESET</text>
<text x="462.20" y="642.80" font-size="9.90" text-anchor="start" fill="#2a2a2a" stroke="#2a2a2a" stroke-width="0.28" textLength="74.20" lengthAdjust="spacingAndGlyphs">ANALOG ASIC</text>
<text x="357.00" y="479.30" font-size="8.30" text-anchor="start" fill="#2a2a2a" stroke="#2a2a2a" stroke-width="0.28" textLength="26.50" lengthAdjust="spacingAndGlyphs">L5441</text>
<text x="434.80" y="479.30" font-size="8.30" text-anchor="start" fill="#2a2a2a" stroke="#2a2a2a" stroke-width="0.28" textLength="26.50" lengthAdjust="spacingAndGlyphs">L5442</text>
<text x="396.00" y="476.60" font-size="8.30" text-anchor="start" fill="#2a2a2a" stroke="#2a2a2a" stroke-width="0.28" textLength="26.50" lengthAdjust="spacingAndGlyphs">D5484</text>
<text x="356.20" y="500.20" font-size="8.30" text-anchor="start" fill="#2a2a2a" stroke="#2a2a2a" stroke-width="0.28" textLength="27.50" lengthAdjust="spacingAndGlyphs">D5485</text>
<text x="356.20" y="509.00" font-size="8.30" text-anchor="start" fill="#2a2a2a" stroke="#2a2a2a" stroke-width="0.28" textLength="27.50" lengthAdjust="spacingAndGlyphs">D5486</text>
<text x="475.00" y="487.40" font-size="8.30" text-anchor="start" fill="#2a2a2a" stroke="#2a2a2a" stroke-width="0.28" textLength="29.50" lengthAdjust="spacingAndGlyphs">DTV5V</text>
<text x="474.30" y="511.00" font-size="8.30" text-anchor="start" fill="#2a2a2a" stroke="#2a2a2a" stroke-width="0.28" textLength="19.50" lengthAdjust="spacingAndGlyphs">DRV</text>
<text x="405.50" y="530.50" font-size="8.30" text-anchor="start" fill="#2a2a2a" stroke="#2a2a2a" stroke-width="0.28" textLength="36.50" lengthAdjust="spacingAndGlyphs">STB3.3V</text>
<text x="731.00" y="667.30" font-size="8.30" text-anchor="start" fill="#2a2a2a" stroke="#2a2a2a" stroke-width="0.28" textLength="37.00" lengthAdjust="spacingAndGlyphs">STB3.3V</text>
<text x="287.60" y="517.00" font-size="10.60" text-anchor="start" fill="#2a2a2a" stroke="#2a2a2a" stroke-width="0.28" textLength="40.00" lengthAdjust="spacingAndGlyphs">IC5606</text>
<text x="309.40" y="535.60" font-size="8.30" text-anchor="middle" fill="#2a2a2a" stroke="#2a2a2a" stroke-width="0.28" textLength="17.00" lengthAdjust="spacingAndGlyphs">STB</text>
<text x="309.40" y="545.00" font-size="8.30" text-anchor="middle" fill="#2a2a2a" stroke="#2a2a2a" stroke-width="0.28" textLength="30.50" lengthAdjust="spacingAndGlyphs">RESET</text>
<text x="359.30" y="549.80" font-size="8.30" text-anchor="start" fill="#2a2a2a" stroke="#2a2a2a" stroke-width="0.28" textLength="27.70" lengthAdjust="spacingAndGlyphs">D5614</text>
<text x="359.30" y="558.80" font-size="8.30" text-anchor="start" fill="#2a2a2a" stroke="#2a2a2a" stroke-width="0.28" textLength="27.70" lengthAdjust="spacingAndGlyphs">D5615</text>
<text x="219.50" y="560.20" font-size="8.30" text-anchor="start" fill="#2a2a2a" stroke="#2a2a2a" stroke-width="0.28" textLength="54.80" lengthAdjust="spacingAndGlyphs">STB_RESET</text>
<text x="220.00" y="586.80" font-size="8.30" text-anchor="start" fill="#2a2a2a" stroke="#2a2a2a" stroke-width="0.28" textLength="50.00" lengthAdjust="spacingAndGlyphs">KEYSCAN3</text>
<text x="294.50" y="584.20" font-size="8.30" text-anchor="start" fill="#2a2a2a" stroke="#2a2a2a" stroke-width="0.28" textLength="26.80" lengthAdjust="spacingAndGlyphs">D5613</text>
<text x="412.00" y="592.20" font-size="8.30" text-anchor="start" fill="#2a2a2a" stroke="#2a2a2a" stroke-width="0.28" textLength="16.00" lengthAdjust="spacingAndGlyphs">IIC0</text>
<text x="411.30" y="613.40" font-size="8.30" text-anchor="start" fill="#2a2a2a" stroke="#2a2a2a" stroke-width="0.28" textLength="23.50" lengthAdjust="spacingAndGlyphs">EEP_</text>
<text x="412.00" y="622.20" font-size="8.30" text-anchor="start" fill="#2a2a2a" stroke="#2a2a2a" stroke-width="0.28" textLength="16.00" lengthAdjust="spacingAndGlyphs">IIC1</text>
<text x="550.50" y="634.00" font-size="8.30" text-anchor="start" fill="#2a2a2a" stroke="#2a2a2a" stroke-width="0.28" textLength="29.50" lengthAdjust="spacingAndGlyphs">PANEL</text>
<text x="550.50" y="642.00" font-size="8.30" text-anchor="start" fill="#2a2a2a" stroke="#2a2a2a" stroke-width="0.28" textLength="16.00" lengthAdjust="spacingAndGlyphs">IIC1</text>
<text x="567.60" y="522.20" font-size="8.30" text-anchor="middle" fill="#2a2a2a" stroke="#2a2a2a" stroke-width="0.28" textLength="29.00" lengthAdjust="spacingAndGlyphs">STB5V</text>
<text x="567.60" y="548.20" font-size="8.30" text-anchor="middle" fill="#2a2a2a" stroke="#2a2a2a" stroke-width="0.28" textLength="30.00" lengthAdjust="spacingAndGlyphs">SUB9V</text>
<text x="567.60" y="574.60" font-size="8.30" text-anchor="middle" fill="#2a2a2a" stroke="#2a2a2a" stroke-width="0.28" textLength="30.00" lengthAdjust="spacingAndGlyphs">SUB5V</text>
<text x="490.00" y="536.00" font-size="8.30" text-anchor="start" fill="#2a2a2a" stroke="#2a2a2a" stroke-width="0.28" textLength="18.50" lengthAdjust="spacingAndGlyphs">STB</text>
<text x="490.00" y="544.40" font-size="8.30" text-anchor="start" fill="#2a2a2a" stroke="#2a2a2a" stroke-width="0.28" textLength="24.50" lengthAdjust="spacingAndGlyphs">+3.3V</text>
<text x="503.20" y="569.50" font-size="9.20" text-anchor="middle" fill="#2a2a2a" stroke="#2a2a2a" stroke-width="0.28" textLength="26.50" lengthAdjust="spacingAndGlyphs">MUTE</text>
<text x="988.60" y="192.90" font-size="10.60" text-anchor="start" fill="#2a2a2a" stroke="#2a2a2a" stroke-width="0.28" textLength="39.00" lengthAdjust="spacingAndGlyphs">IC5100</text>
<text x="1045.60" y="192.90" font-size="9.20" text-anchor="start" fill="#2a2a2a" stroke="#2a2a2a" stroke-width="0.28" textLength="21.30" lengthAdjust="spacingAndGlyphs">GC6</text>
<text x="890.50" y="218.60" font-size="8.30" text-anchor="start" fill="#2a2a2a" stroke="#2a2a2a" stroke-width="0.28" textLength="34.50" lengthAdjust="spacingAndGlyphs">PORT-A</text>
<text x="890.50" y="238.10" font-size="8.30" text-anchor="start" fill="#2a2a2a" stroke="#2a2a2a" stroke-width="0.28" textLength="34.50" lengthAdjust="spacingAndGlyphs">PORT-C</text>
<text x="890.50" y="258.00" font-size="8.30" text-anchor="start" fill="#2a2a2a" stroke="#2a2a2a" stroke-width="0.28" textLength="25.00" lengthAdjust="spacingAndGlyphs">LOSD</text>
<text x="890.50" y="282.80" font-size="8.30" text-anchor="start" fill="#2a2a2a" stroke="#2a2a2a" stroke-width="0.28" textLength="40.50" lengthAdjust="spacingAndGlyphs">EXB BUS</text>
<text x="803.00" y="211.00" font-size="8.30" text-anchor="start" fill="#2a2a2a" stroke="#2a2a2a" stroke-width="0.28" textLength="52.00" lengthAdjust="spacingAndGlyphs">R/G/B_36bit</text>
<text x="809.50" y="230.00" font-size="8.30" text-anchor="start" fill="#2a2a2a" stroke="#2a2a2a" stroke-width="0.28" textLength="47.50" lengthAdjust="spacingAndGlyphs">Y/UV_16bit</text>
<text x="814.30" y="252.30" font-size="8.30" text-anchor="start" fill="#2a2a2a" stroke="#2a2a2a" stroke-width="0.28" textLength="46.50" lengthAdjust="spacingAndGlyphs">OSD_16bit</text>
<text x="827.00" y="275.00" font-size="8.30" text-anchor="start" fill="#2a2a2a" stroke="#2a2a2a" stroke-width="0.28" textLength="42.30" lengthAdjust="spacingAndGlyphs">CPU BUS</text>
<text x="952.50" y="284.00" font-size="8.30" text-anchor="start" fill="#2a2a2a" stroke="#2a2a2a" stroke-width="0.28" textLength="24.00" lengthAdjust="spacingAndGlyphs" transform="rotate(-90 952.50 284.00)">+1.8V</text>
<text x="965.80" y="284.00" font-size="8.30" text-anchor="start" fill="#2a2a2a" stroke="#2a2a2a" stroke-width="0.28" textLength="24.00" lengthAdjust="spacingAndGlyphs" transform="rotate(-90 965.80 284.00)">+1.2V</text>
<text x="978.80" y="284.00" font-size="8.30" text-anchor="start" fill="#2a2a2a" stroke="#2a2a2a" stroke-width="0.28" textLength="24.00" lengthAdjust="spacingAndGlyphs" transform="rotate(-90 978.80 284.00)">+3.3V</text>
<text x="992.20" y="284.00" font-size="8.30" text-anchor="start" fill="#2a2a2a" stroke="#2a2a2a" stroke-width="0.28" textLength="24.00" lengthAdjust="spacingAndGlyphs" transform="rotate(-90 992.20 284.00)">+3.3V</text>
<text x="1097.80" y="284.00" font-size="8.30" text-anchor="start" fill="#2a2a2a" stroke="#2a2a2a" stroke-width="0.28" textLength="33.00" lengthAdjust="spacingAndGlyphs" transform="rotate(-90 1097.80 284.00)">DDR I/F</text>
<text x="1117.80" y="284.00" font-size="8.30" text-anchor="start" fill="#2a2a2a" stroke="#2a2a2a" stroke-width="0.28" textLength="40.00" lengthAdjust="spacingAndGlyphs" transform="rotate(-90 1117.80 284.00)">GC6 RST</text>
<text x="1131.30" y="254.60" font-size="8.30" text-anchor="start" fill="#2a2a2a" stroke="#2a2a2a" stroke-width="0.28" textLength="23.00" lengthAdjust="spacingAndGlyphs">LVDS</text>
<text x="1165.30" y="248.00" font-size="8.30" text-anchor="start" fill="#2a2a2a" stroke="#2a2a2a" stroke-width="0.28" textLength="52.50" lengthAdjust="spacingAndGlyphs">LVDS DATA</text>
<text x="829.80" y="318.80" font-size="10.60" text-anchor="start" fill="#2a2a2a" stroke="#2a2a2a" stroke-width="0.28" textLength="38.20" lengthAdjust="spacingAndGlyphs">IC5851</text>
<text x="880.50" y="313.00" font-size="9.50" text-anchor="start" fill="#2a2a2a" stroke="#2a2a2a" stroke-width="0.28" textLength="51.50" lengthAdjust="spacingAndGlyphs">GC6+1.8V</text>
<text x="880.50" y="324.00" font-size="9.50" text-anchor="start" fill="#2a2a2a" stroke="#2a2a2a" stroke-width="0.28" textLength="51.50" lengthAdjust="spacingAndGlyphs">GC6+1.2V</text>
<text x="871.50" y="343.80" font-size="9.00" text-anchor="start" fill="#2a2a2a" stroke="#2a2a2a" stroke-width="0.28" textLength="26.00" lengthAdjust="spacingAndGlyphs">+1.8V</text>
<text x="871.50" y="363.40" font-size="9.00" text-anchor="start" fill="#2a2a2a" stroke="#2a2a2a" stroke-width="0.28" textLength="26.00" lengthAdjust="spacingAndGlyphs">+1.2V</text>
<text x="1001.30" y="322.80" font-size="10.60" text-anchor="start" fill="#2a2a2a" stroke="#2a2a2a" stroke-width="0.28" textLength="58.80" lengthAdjust="spacingAndGlyphs">IC5001,02</text>
<text x="1019.50" y="343.60" font-size="9.60" text-anchor="start" fill="#2a2a2a" stroke="#2a2a2a" stroke-width="0.28" textLength="29.50" lengthAdjust="spacingAndGlyphs">DDR2</text>
<text x="1030.50" y="376.80" font-size="10.60" text-anchor="start" fill="#2a2a2a" stroke="#2a2a2a" stroke-width="0.28" textLength="39.50" lengthAdjust="spacingAndGlyphs">IC5201</text>
<text x="1015.00" y="396.50" font-size="9.60" text-anchor="start" fill="#2a2a2a" stroke="#2a2a2a" stroke-width="0.28" textLength="70.00" lengthAdjust="spacingAndGlyphs">CLK BUFFER</text>
<text x="833.80" y="409.80" font-size="10.60" text-anchor="start" fill="#2a2a2a" stroke="#2a2a2a" stroke-width="0.28" textLength="38.80" lengthAdjust="spacingAndGlyphs">IC5300</text>
<text x="885.00" y="409.90" font-size="9.50" text-anchor="start" fill="#2a2a2a" stroke="#2a2a2a" stroke-width="0.28" textLength="51.50" lengthAdjust="spacingAndGlyphs">GC6+3.3V</text>
<text x="867.30" y="434.30" font-size="9.00" text-anchor="start" fill="#2a2a2a" stroke="#2a2a2a" stroke-width="0.28" textLength="26.00" lengthAdjust="spacingAndGlyphs">+3.3V</text>
<text x="932.00" y="450.20" font-size="8.30" text-anchor="start" fill="#2a2a2a" stroke="#2a2a2a" stroke-width="0.28" textLength="38.00" lengthAdjust="spacingAndGlyphs">SUB3.3V</text>
<text x="791.50" y="493.00" font-size="8.30" text-anchor="start" fill="#2a2a2a" stroke="#2a2a2a" stroke-width="0.28" textLength="40.50" lengthAdjust="spacingAndGlyphs">GC6 RST</text>
<text x="941.30" y="679.20" font-size="8.30" text-anchor="start" fill="#2a2a2a" stroke="#2a2a2a" stroke-width="0.28" textLength="55.00" lengthAdjust="spacingAndGlyphs">HDMI_CEC_</text>
<text x="941.30" y="687.20" font-size="8.30" text-anchor="start" fill="#2a2a2a" stroke="#2a2a2a" stroke-width="0.28" textLength="32.50" lengthAdjust="spacingAndGlyphs">PU_ON</text>
<text x="943.30" y="704.30" font-size="8.30" text-anchor="start" fill="#2a2a2a" stroke="#2a2a2a" stroke-width="0.28" textLength="48.00" lengthAdjust="spacingAndGlyphs">HDMI_CEC</text>
<text x="943.30" y="726.60" font-size="8.30" text-anchor="start" fill="#2a2a2a" stroke="#2a2a2a" stroke-width="0.28" textLength="37.50" lengthAdjust="spacingAndGlyphs">DDC_IIC</text>
<text x="941.30" y="747.30" font-size="8.30" text-anchor="start" fill="#2a2a2a" stroke="#2a2a2a" stroke-width="0.28" textLength="46.80" lengthAdjust="spacingAndGlyphs">+5V(HDMI)</text>
<text x="941.30" y="754.80" font-size="8.30" text-anchor="start" fill="#2a2a2a" stroke="#2a2a2a" stroke-width="0.28" textLength="42.00" lengthAdjust="spacingAndGlyphs">DET 0,1,2</text>
<text x="792.50" y="698.00" font-size="8.30" text-anchor="start" fill="#2a2a2a" stroke="#2a2a2a" stroke-width="0.28" textLength="49.30" lengthAdjust="spacingAndGlyphs">HDMI_CEC</text>
<text x="793.30" y="720.00" font-size="8.30" text-anchor="start" fill="#2a2a2a" stroke="#2a2a2a" stroke-width="0.28" textLength="58.00" lengthAdjust="spacingAndGlyphs">DDC0,1,2_IIC</text>
<text x="793.30" y="743.00" font-size="8.30" text-anchor="start" fill="#2a2a2a" stroke="#2a2a2a" stroke-width="0.28" textLength="89.70" lengthAdjust="spacingAndGlyphs">+5V(HDMI)DET 0,1,2</text>
<text x="872.50" y="670.00" font-size="8.30" text-anchor="start" fill="#2a2a2a" stroke="#2a2a2a" stroke-width="0.28" textLength="26.30" lengthAdjust="spacingAndGlyphs">D1107</text>
</svg>
<div class="abs" style="left:0;top:0;width:100%;height:4px;background:linear-gradient(180deg,rgba(0,0,0,0.10),rgba(0,0,0,0))"></div>
</div>

<!-- vertical scrollbar -->
<div id="vs" class="abs dith">
 <div class="abs btn3" style="left:0;top:0;width:16px;height:16px"><svg width="14" height="14"><path d="M3.5 9 L10.5 9 L7 5 Z" fill="#000"/></svg></div>
 <div class="abs btn3" style="left:0;top:166px;width:16px;height:12px"></div>
 <div class="abs btn3" style="left:0;top:664px;width:16px;height:16px"><svg width="14" height="14"><path d="M3.5 5 L10.5 5 L7 9 Z" fill="#000"/></svg></div>
</div>

<!-- horizontal scrollbar -->
<div id="hs" class="abs">
 <div class="abs" style="left:0;top:0;width:120px;height:16px;background:#dedede"></div><svg class="abs" style="left:0;top:0" width="120" height="16" font-family="Liberation Sans, sans-serif"><text x="20.9" y="11.8" font-size="11" textLength="78.4" lengthAdjust="spacingAndGlyphs">17.00 x 11.00 in</text></svg>
 <div class="abs dith" style="left:120px;top:0;width:1087px;height:16px"></div>
 <div class="abs btn3" style="left:120px;top:0;width:16px;height:16px"><svg width="14" height="14"><path d="M8.5 3.5 L8.5 10.5 L4.5 7 Z" fill="#000"/></svg></div>
 <div class="abs btn3" style="left:235px;top:0;width:464px;height:16px"></div>
 <div class="abs btn3" style="left:1207px;top:0;width:16px;height:16px"><svg width="14" height="14"><path d="M5.5 3.5 L5.5 10.5 L9.5 7 Z" fill="#000"/></svg></div>
</div>
<div class="abs" style="left:1264px;top:756px;width:16px;height:16px;background:#d4d0c8"></div>

<!-- taskbar -->
<div id="task" class="abs">
<div class="abs btn3" style="left:2px;top:4px;width:52px;height:21px"></div>
<svg class="abs" style="left:4px;top:6px" width="16" height="16" viewBox="0 0 16 16"><path d="M1 3.5 C3 2 5 2.5 7 4 L6 8 C4 6.5 2.5 6.5 0.5 7.5 Z" fill="#e8542c"/><path d="M8 4.3 C10 5.5 12 5.6 14.5 4.2 L13.5 8.2 C11.5 9.5 9 9.3 7 8.2 Z" fill="#6cc040"/><path d="M0.2 8.8 C2 7.6 4 7.8 5.8 9 L4.8 13 C3 11.8 1.2 11.7 -0.6 12.8 Z" fill="#3c78e0"/><path d="M6.8 9.4 C8.8 10.5 11 10.6 13.2 9.4 L12.2 13.4 C10 14.6 8 14.4 5.8 13.3 Z" fill="#f4c430"/></svg>

<div class="abs" style="left:61px;top:4px;width:3px;height:21px;border:1px solid;border-color:#fff #808080 #808080 #fff"></div>
<div class="abs" style="left:144px;top:4px;width:3px;height:21px;border:1px solid;border-color:#fff #808080 #808080 #fff"></div>
<svg class="abs" style="left:71px;top:6px" width="18" height="17" viewBox="0 0 18 17"><circle cx="9" cy="9" r="6.2" fill="#3aa0e8" stroke="#1c68b8" stroke-width="1"/><path d="M5.4 9 H12.6 C12.6 5.5 6 5 5.4 9 C5.4 13 11 13.4 12.4 10.8" fill="none" stroke="#fff" stroke-width="1.8"/><path d="M1.5 13 C-1 7 10 0 16.5 3" fill="none" stroke="#e8b820" stroke-width="1.4"/></svg>
<svg class="abs" style="left:93px;top:6px" width="17" height="17" viewBox="0 0 17 17"><rect x="1.5" y="2" width="13.5" height="13" rx="2.5" fill="#4a9ae4" stroke="#1c5cae" stroke-width="1"/><rect x="4.5" y="4.5" width="7.5" height="8" fill="#fff"/><path d="M6 9 H10.5 M9 7 l2 2 l-2 2" stroke="#2c6cc0" stroke-width="1.3" fill="none"/></svg>
<!-- task buttons -->
<div class="abs btn3" style="left:151px;top:4px;width:159px;height:21px"></div>
<svg class="abs" style="left:154px;top:6px" width="18" height="17" viewBox="0 0 18 17"><circle cx="9" cy="9" r="6.2" fill="#3aa0e8" stroke="#1c68b8" stroke-width="1"/><path d="M5.4 9 H12.6 C12.6 5.5 6 5 5.4 9 C5.4 13 11 13.4 12.4 10.8" fill="none" stroke="#fff" stroke-width="1.8"/><path d="M1.5 13 C-1 7 10 0 16.5 3" fill="none" stroke="#e8b820" stroke-width="1.4"/></svg>
<div class="abs dith" style="left:314px;top:4px;width:159px;height:21px;border:1px solid;border-color:#404040 #fff #fff #404040;box-shadow:inset 1px 1px 0 #808080"></div>
<svg class="abs" style="left:316.500px;top:6.500px" width="20" height="18" viewBox="0 0 20 18"><path d="M5.500 1.500 H14 L17.300 4.800 V16.200 H5.500 Z" fill="#fbfbfb" stroke="#b0a8a8" stroke-width="0.700"/><path d="M14 1.500 V4.800 H17.300 Z" fill="#d8d0d0"/><rect x="2.300" y="3" width="9.400" height="3.800" fill="#b01c28"/><path d="M8 14.600 C9.600 12.400 11.200 9.600 11.300 7.600 C11.300 6.600 12.500 6.700 12.400 7.900 C12.300 10 14 12 16 12.300 C16.800 12.500 16.600 13.400 15.600 13.200 C13.400 12.800 10.400 13.200 8.500 15 Z" fill="none" stroke="#c01822" stroke-width="1.200"/></svg>
<!-- tray -->
<div class="abs" style="left:1018px;top:4px;width:259px;height:21px;border:1px solid;border-color:#808080 #fff #fff #808080"></div>
<svg class="abs" style="left:1018px;top:4px" width="259" height="21" viewBox="1018 776 259 21" font-family="Liberation Sans, sans-serif">
<!-- 1 -->
<rect x="1022" y="780.5" width="8.5" height="7" fill="#1c2c6c" stroke="#8a94b4" stroke-width="0.8"/><rect x="1022" y="789.5" width="8" height="3" fill="#e8e8f0" stroke="#30408c" stroke-width="0.8"/><path d="M1032.5 781.5 q2 2.4 0 5 M1034.6 780 q3 4 0 8" fill="none" stroke="#7a7a8a" stroke-width="0.9"/>
<!-- 2 -->
<g fill="#20c828" stroke="#0a4a0e" stroke-width="0.9"><rect x="1039.6" y="790" width="3" height="4"/><rect x="1043.6" y="787" width="3" height="7"/><rect x="1047.6" y="783" width="3" height="11"/><rect x="1051.6" y="779" width="3" height="15"/></g>
<!-- 3 -->
<path d="M1060 790 A6 6 0 1 1 1071 787" fill="none" stroke="#1a1a1a" stroke-width="4.2"/><path d="M1060 790 A6 6 0 1 1 1071 787" fill="none" stroke="#f0d020" stroke-width="2.2"/><path d="M1057.5 787 l3.5 4.5 l3.5 -4.5 z" fill="#f0d020" stroke="#1a1a1a" stroke-width="0.8"/><rect x="1068" y="786" width="5" height="8" fill="#e02818" stroke="#601008" stroke-width="0.8"/><rect x="1069.8" y="787.5" width="1.4" height="3.2" fill="#fff"/>
<!-- 4 -->
<text x="1078" y="793.5" font-size="17" font-weight="bold" fill="#f4e8a0" stroke="#8a7420" stroke-width="0.8">?</text>
<!-- 5 -->
<rect x="1098.5" y="779.5" width="7" height="6.5" fill="#2c3ca0" stroke="#8088c8" stroke-width="0.8"/><rect x="1094" y="784" width="7" height="6.5" fill="#2c3ca0" stroke="#8088c8" stroke-width="0.8"/><rect x="1093.5" y="791.2" width="8" height="2" fill="#c8cce8"/><path d="M1100.5 787 l7.5 7 M1108 787 l-7.500 7" stroke="#e82020" stroke-width="2.2"/>
<!-- 6 -->
<circle cx="1117" cy="784.5" r="5.4" fill="#8a8a8a" stroke="#3a3a3a" stroke-width="1"/><circle cx="1117" cy="784.5" r="1.8" fill="#e0e0e0"/><circle cx="1121.500" cy="789.500" r="4" fill="#fff" stroke="#d82020" stroke-width="1.6"/><path d="M1119 787 l5 5" stroke="#d82020" stroke-width="1.5"/>
<!-- 7 -->
<path d="M1131.500 783 l5.500 -3.500 v2.200 h5 v3.500 h-5 v2.200 z" fill="#30b038" stroke="#0c5c14" stroke-width="0.8"/><path d="M1131 789 l8 -3 l4 3.500 l-8 3.500 z" fill="#c8c8c8" stroke="#3a3a3a" stroke-width="0.8"/><path d="M1131 789 v2.500 l4 3.500 v-2.500 z" fill="#8a8a8a" stroke="#3a3a3a" stroke-width="0.6"/>
<!-- 8 -->
<rect x="1148" y="779.500" width="14.500" height="10" fill="#c0c8e8" stroke="#1c2470" stroke-width="1.600"/><rect x="1148" y="790.500" width="14.500" height="3.500" fill="#1c2470"/><rect x="1153" y="791.200" width="4.500" height="2" fill="#d8dcf0"/>
<!-- 9 -->
<path d="M1167.500 779.500 h11 v7 q-1 5 -5.500 7.500 q-4.500 -2.500 -5.500 -7.500 z" fill="#f0d060" stroke="#8a6c10" stroke-width="0.900"/><path d="M1173 779.500 v14" stroke="#c8a020" stroke-width="1"/><circle cx="1176.500" cy="790.500" r="3.400" fill="#28b830" stroke="#0c5c14" stroke-width="0.800"/>
<!-- 10 -->
<rect x="1186" y="780.500" width="10" height="9" fill="#40c040" stroke="#107018" stroke-width="1"/><path d="M1189 783 l4 4 M1193 783 l-4 4" stroke="#0c5c14" stroke-width="1"/><rect x="1185" y="790.500" width="12" height="3" fill="#30a838" stroke="#107018" stroke-width="0.800"/>
<!-- 11 -->
<rect x="1201.500" y="779" width="9.500" height="8" fill="#e02c20" stroke="#701008" stroke-width="0.900"/><rect x="1206" y="784" width="10" height="7.500" fill="#40b838" stroke="#0c3c10" stroke-width="1.200"/><rect x="1208" y="792.200" width="6" height="1.800" fill="#1a1a1a"/><rect x="1201" y="787.500" width="3.500" height="2.500" fill="#2848c0"/>
<text x="1224.500" y="790.500" font-size="11" fill="#000" textLength="44" lengthAdjust="spacingAndGlyphs">11:02 PM</text>
</svg>
<svg class="abs" style="left:0;top:0" width="480" height="28" font-family="Liberation Sans, sans-serif"><text x="22" y="18.3" font-size="12" font-weight="bold" textLength="28.2" lengthAdjust="spacingAndGlyphs">Start</text><text x="175" y="18.3" font-size="11.6" textLength="127.5" lengthAdjust="spacingAndGlyphs">Westinghouse LD 4655V...</text><text x="338.8" y="18.8" font-size="11.6" font-weight="bold" textLength="127.4" lengthAdjust="spacingAndGlyphs">Panasonic_TC-P50G1...</text></svg>

</div>
</body></html>
